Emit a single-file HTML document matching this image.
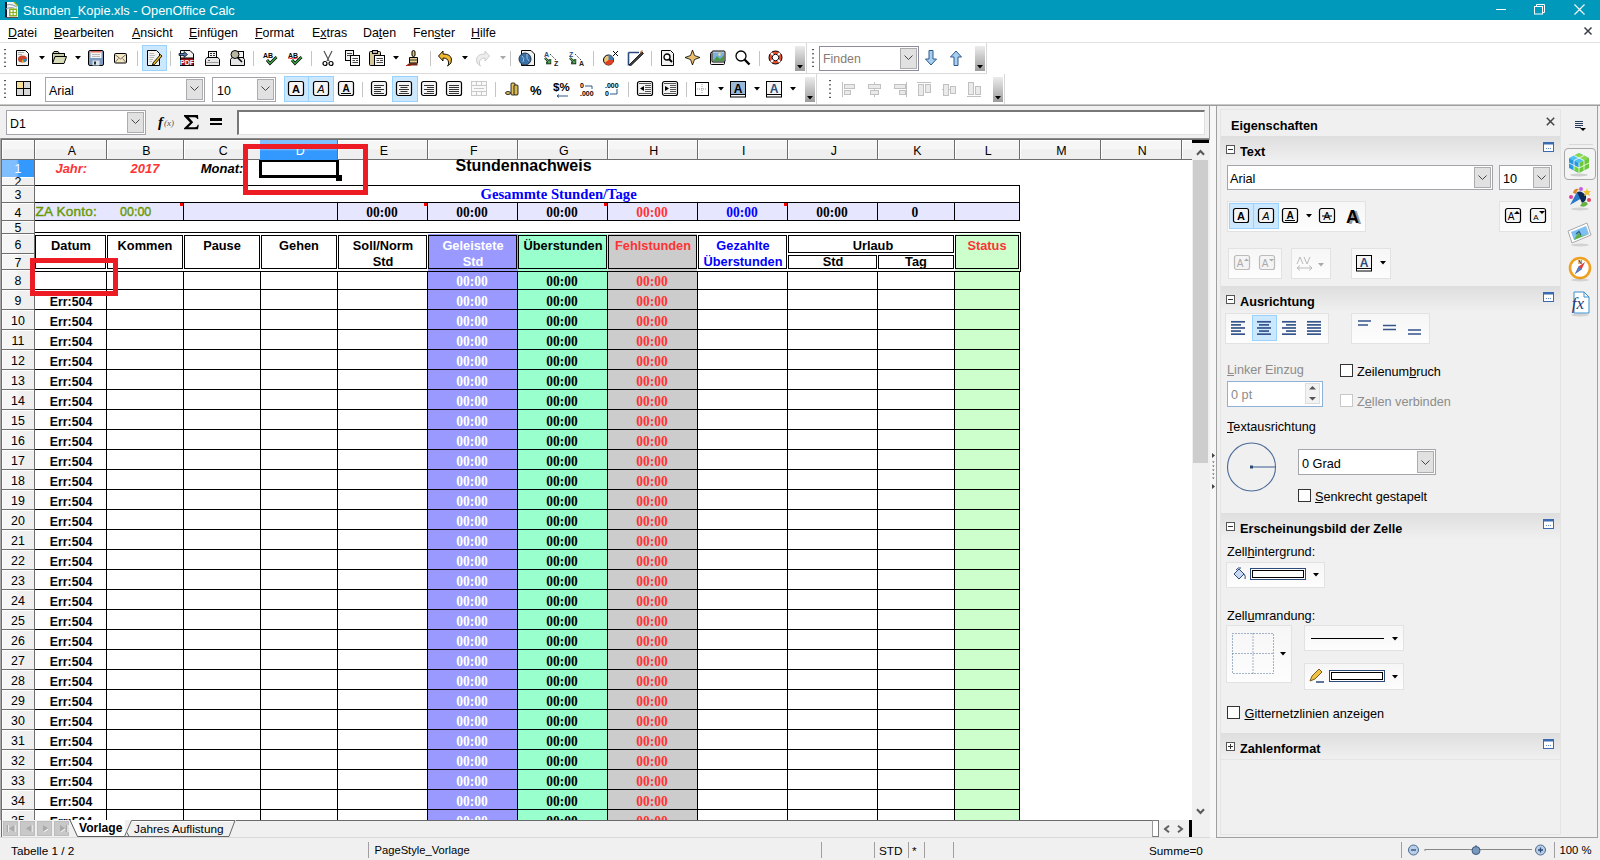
<!DOCTYPE html><html><head><meta charset="utf-8"><title>OpenOffice Calc</title><style>
html,body{margin:0;padding:0}body{width:1600px;height:860px;position:relative;overflow:hidden;background:#fff;font-family:'Liberation Sans',sans-serif}
.a{position:absolute}.t{white-space:pre}svg{overflow:visible}
</style></head><body>
<div class="a" style="left:0px;top:0px;width:1600px;height:20px;background:#0099bc;"></div>
<svg class="a" style="left:5px;top:2px;" width="13" height="15" viewBox="0 0 13 15"><path d="M0 0H9L13 4V15H0Z" fill="#f4f4fa"/><rect x="0" y="0" width="2" height="15" fill="#101828"/><path d="M2 3Q6 1 12 5M1 7Q5 5 9 6" stroke="#9aa" stroke-width="1.2" fill="none"/><path d="M9 0L13 4" stroke="#8cb41c" stroke-width="1.5"/><rect x="4" y="6.5" width="8" height="8" fill="#8cb41c"/><rect x="5.5" y="8" width="2" height="2" fill="#fff"/><rect x="8.8" y="8" width="2" height="2" fill="#fff"/><rect x="5.5" y="11" width="2" height="2" fill="#fff"/><rect x="8.8" y="11" width="2" height="2" fill="#fff"/><rect x="0" y="15" width="13" height="1" fill="#6a4a4a"/></svg>
<div class="a t" style="top:4.96px;font-size:12.8px;line-height:12.8px;color:#fff;font-family:'Liberation Sans',sans-serif;left:23px;">Stunden_Kopie.xls - OpenOffice Calc</div>
<div class="a" style="left:1496px;top:9px;width:10px;height:1px;background:#fff;"></div>
<svg class="a" style="left:1534px;top:4px;" width="12" height="12" viewBox="0 0 12 12"><rect x="0.5" y="2.5" width="8" height="7.5" fill="none" stroke="#fff"/><path d="M2.5 2.5V0.5H10.5V8.5H8.5" fill="none" stroke="#fff"/></svg>
<svg class="a" style="left:1574px;top:4px;" width="11" height="11" viewBox="0 0 11 11"><path d="M0.5 0.5L10.5 10.5M10.5 0.5L0.5 10.5" stroke="#fff" stroke-width="1.1"/></svg>
<div class="a t" style="top:26.50px;font-size:12.4px;line-height:12.4px;color:#000;font-family:'Liberation Sans',sans-serif;left:8px;"><u>D</u>atei</div>
<div class="a t" style="top:26.50px;font-size:12.4px;line-height:12.4px;color:#000;font-family:'Liberation Sans',sans-serif;left:54px;"><u>B</u>earbeiten</div>
<div class="a t" style="top:26.50px;font-size:12.4px;line-height:12.4px;color:#000;font-family:'Liberation Sans',sans-serif;left:132px;"><u>A</u>nsicht</div>
<div class="a t" style="top:26.50px;font-size:12.4px;line-height:12.4px;color:#000;font-family:'Liberation Sans',sans-serif;left:189px;"><u>E</u>infügen</div>
<div class="a t" style="top:26.50px;font-size:12.4px;line-height:12.4px;color:#000;font-family:'Liberation Sans',sans-serif;left:255px;"><u>F</u>ormat</div>
<div class="a t" style="top:26.50px;font-size:12.4px;line-height:12.4px;color:#000;font-family:'Liberation Sans',sans-serif;left:312px;">E<u>x</u>tras</div>
<div class="a t" style="top:26.50px;font-size:12.4px;line-height:12.4px;color:#000;font-family:'Liberation Sans',sans-serif;left:363px;">Da<u>t</u>en</div>
<div class="a t" style="top:26.50px;font-size:12.4px;line-height:12.4px;color:#000;font-family:'Liberation Sans',sans-serif;left:413px;">Fen<u>s</u>ter</div>
<div class="a t" style="top:26.50px;font-size:12.4px;line-height:12.4px;color:#000;font-family:'Liberation Sans',sans-serif;left:471px;"><u>H</u>ilfe</div>
<svg class="a" style="left:1584px;top:27px;" width="8" height="8" viewBox="0 0 8 8"><path d="M0.5 0.5L7.5 7.5M7.5 0.5L0.5 7.5" stroke="#3a3f48" stroke-width="1.5"/></svg>
<div class="a" style="left:0px;top:42px;width:1600px;height:1px;background:#e3e3e3;"></div>
<div class="a" style="left:0px;top:73px;width:987px;height:1px;background:#dadada;"></div>
<div class="a" style="left:0px;top:104px;width:1600px;height:1px;background:#c8c8c8;"></div>
<div class="a" style="left:0px;top:105px;width:1600px;height:1px;background:#9a9a9a;"></div>
<svg class="a" style="left:4px;top:49px;" width="3" height="18" viewBox="0 0 3 18"><rect x="0" y="0.0" width="2" height="1.2" fill="#555"/><rect x="0" y="4.2" width="2" height="1.2" fill="#555"/><rect x="0" y="8.4" width="2" height="1.2" fill="#555"/><rect x="0" y="12.6" width="2" height="1.2" fill="#555"/><rect x="0" y="16.8" width="2" height="1.2" fill="#555"/></svg>
<svg class="a" style="left:39px;top:56px;" width="6" height="4" viewBox="0 0 6 4"><path d="M0 0H6L3 3.5Z" fill="#000"/></svg>
<svg class="a" style="left:75px;top:56px;" width="6" height="4" viewBox="0 0 6 4"><path d="M0 0H6L3 3.5Z" fill="#000"/></svg>
<div class="a" style="left:137px;top:51px;width:1px;height:15px;background:#c4c4c4;"></div>
<div class="a" style="left:142px;top:45px;width:23px;height:24px;border:1px solid #99d1ff;background:#cce8ff;"></div>
<div class="a" style="left:170px;top:51px;width:1px;height:15px;background:#c4c4c4;"></div>
<div class="a" style="left:253px;top:51px;width:1px;height:15px;background:#c4c4c4;"></div>
<div class="a" style="left:311px;top:51px;width:1px;height:15px;background:#c4c4c4;"></div>
<svg class="a" style="left:393px;top:56px;" width="6" height="4" viewBox="0 0 6 4"><path d="M0 0H6L3 3.5Z" fill="#000"/></svg>
<div class="a" style="left:430px;top:51px;width:1px;height:15px;background:#c4c4c4;"></div>
<svg class="a" style="left:462px;top:56px;" width="6" height="4" viewBox="0 0 6 4"><path d="M0 0H6L3 3.5Z" fill="#000"/></svg>
<svg class="a" style="left:500px;top:56px;" width="6" height="4" viewBox="0 0 6 4"><path d="M0 0H6L3 3.5Z" fill="#aaa"/></svg>
<div class="a" style="left:510px;top:51px;width:1px;height:15px;background:#c4c4c4;"></div>
<div class="a" style="left:593px;top:51px;width:1px;height:15px;background:#c4c4c4;"></div>
<div class="a" style="left:651px;top:51px;width:1px;height:15px;background:#c4c4c4;"></div>
<div class="a" style="left:759px;top:51px;width:1px;height:15px;background:#c4c4c4;"></div>
<div class="a" style="left:795px;top:46px;width:10px;height:25px;background:linear-gradient(#ececec,#9c9c9c)"></div>
<svg class="a" style="left:797px;top:65px;" width="6" height="4" viewBox="0 0 6 4"><path d="M0 0H6L3 3.5Z" fill="#000"/></svg>
<div class="a" style="left:806px;top:43px;width:1px;height:31px;background:#d8d8d8;"></div>
<svg class="a" style="left:812px;top:49px;" width="3" height="18" viewBox="0 0 3 18"><rect x="0" y="0.0" width="2" height="1.2" fill="#555"/><rect x="0" y="4.2" width="2" height="1.2" fill="#555"/><rect x="0" y="8.4" width="2" height="1.2" fill="#555"/><rect x="0" y="12.6" width="2" height="1.2" fill="#555"/><rect x="0" y="16.8" width="2" height="1.2" fill="#555"/></svg>
<div class="a" style="left:819px;top:46px;width:98px;height:23px;border:1px solid #8c8ca0;background:#fff;"></div>
<div class="a" style="left:900px;top:48px;width:17px;height:21px;background:#e1e1e1;box-sizing:border-box;border:1px solid #adadad"></div>
<svg class="a" style="left:904px;top:55px;" width="9" height="5" viewBox="0 0 9 5"><path d="M0.5 0.5L4.5 4.5L8.5 0.5" stroke="#444" fill="none"/></svg>
<div class="a t" style="top:52.50px;font-size:12.4px;line-height:12.4px;color:#8a7a70;font-family:'Liberation Sans',sans-serif;left:823px;">Finden</div>
<div class="a" style="left:975px;top:46px;width:10px;height:25px;background:linear-gradient(#ececec,#9c9c9c)"></div>
<svg class="a" style="left:977px;top:65px;" width="6" height="4" viewBox="0 0 6 4"><path d="M0 0H6L3 3.5Z" fill="#000"/></svg>
<div class="a" style="left:986px;top:43px;width:1px;height:31px;background:#d8d8d8;"></div>
<svg class="a" style="left:4px;top:80px;" width="3" height="18" viewBox="0 0 3 18"><rect x="0" y="0.0" width="2" height="1.2" fill="#555"/><rect x="0" y="4.2" width="2" height="1.2" fill="#555"/><rect x="0" y="8.4" width="2" height="1.2" fill="#555"/><rect x="0" y="12.6" width="2" height="1.2" fill="#555"/><rect x="0" y="16.8" width="2" height="1.2" fill="#555"/></svg>
<div class="a" style="left:45px;top:77px;width:158px;height:23px;border:1px solid #a4a4aa;background:#fff;"></div>
<div class="a" style="left:186px;top:79px;width:17px;height:21px;background:#e1e1e1;box-sizing:border-box;border:1px solid #adadad"></div>
<svg class="a" style="left:190px;top:86px;" width="9" height="5" viewBox="0 0 9 5"><path d="M0.5 0.5L4.5 4.5L8.5 0.5" stroke="#444" fill="none"/></svg>
<div class="a t" style="top:84.50px;font-size:12.4px;line-height:12.4px;color:#000;font-family:'Liberation Sans',sans-serif;left:49px;">Arial</div>
<div class="a" style="left:212px;top:77px;width:62px;height:23px;border:1px solid #a4a4aa;background:#fff;"></div>
<div class="a" style="left:257px;top:79px;width:17px;height:21px;background:#e1e1e1;box-sizing:border-box;border:1px solid #adadad"></div>
<svg class="a" style="left:261px;top:86px;" width="9" height="5" viewBox="0 0 9 5"><path d="M0.5 0.5L4.5 4.5L8.5 0.5" stroke="#444" fill="none"/></svg>
<div class="a t" style="top:84.50px;font-size:12.4px;line-height:12.4px;color:#000;font-family:'Liberation Sans',sans-serif;left:217px;">10</div>
<div class="a" style="left:284px;top:76px;width:23px;height:24px;border:1px solid #99d1ff;background:#cce8ff;"></div>
<div class="a" style="left:308px;top:76px;width:24px;height:24px;border:1px solid #99d1ff;background:#cce8ff;"></div>
<div class="a" style="left:362px;top:82px;width:1px;height:15px;background:#c4c4c4;"></div>
<div class="a" style="left:392px;top:76px;width:24px;height:24px;border:1px solid #99d1ff;background:#cce8ff;"></div>
<div class="a" style="left:495px;top:82px;width:1px;height:15px;background:#c4c4c4;"></div>
<div class="a t" style="top:84.00px;font-size:13px;line-height:13px;color:#000;font-family:'Liberation Sans',sans-serif;font-weight:bold;left:530px;">%</div>
<div class="a t" style="top:82.27px;font-size:11.5px;line-height:11.5px;color:#000;font-family:'Liberation Sans',sans-serif;font-weight:bold;left:553px;">$%</div>
<div class="a" style="left:628px;top:82px;width:1px;height:15px;background:#c4c4c4;"></div>
<div class="a" style="left:686px;top:82px;width:1px;height:15px;background:#c4c4c4;"></div>
<svg class="a" style="left:718px;top:87px;" width="6" height="4" viewBox="0 0 6 4"><path d="M0 0H6L3 3.5Z" fill="#000"/></svg>
<svg class="a" style="left:754px;top:87px;" width="6" height="4" viewBox="0 0 6 4"><path d="M0 0H6L3 3.5Z" fill="#000"/></svg>
<svg class="a" style="left:790px;top:87px;" width="6" height="4" viewBox="0 0 6 4"><path d="M0 0H6L3 3.5Z" fill="#000"/></svg>
<div class="a" style="left:805px;top:77px;width:10px;height:25px;background:linear-gradient(#ececec,#9c9c9c)"></div>
<svg class="a" style="left:807px;top:96px;" width="6" height="4" viewBox="0 0 6 4"><path d="M0 0H6L3 3.5Z" fill="#000"/></svg>
<div class="a" style="left:816px;top:74px;width:1px;height:30px;background:#d8d8d8;"></div>
<svg class="a" style="left:829px;top:80px;" width="3" height="18" viewBox="0 0 3 18"><rect x="0" y="0.0" width="2" height="1.2" fill="#555"/><rect x="0" y="4.2" width="2" height="1.2" fill="#555"/><rect x="0" y="8.4" width="2" height="1.2" fill="#555"/><rect x="0" y="12.6" width="2" height="1.2" fill="#555"/><rect x="0" y="16.8" width="2" height="1.2" fill="#555"/></svg>
<div class="a" style="left:993px;top:77px;width:10px;height:25px;background:linear-gradient(#ececec,#9c9c9c)"></div>
<svg class="a" style="left:995px;top:96px;" width="6" height="4" viewBox="0 0 6 4"><path d="M0 0H6L3 3.5Z" fill="#000"/></svg>
<div class="a" style="left:1004px;top:74px;width:1px;height:30px;background:#d8d8d8;"></div>
<svg class="a" style="left:0px;top:0px;pointer-events:none" width="1600" height="110" viewBox="0 0 1600 110"><g transform="translate(16,50)"><path d="M0.5 0.5H9.5L12.5 3.5V15.5H0.5Z" fill="#f4f4f4" stroke="#000"/><ellipse cx="6.5" cy="9" rx="4.5" ry="3.5" fill="#c8452e"/><path d="M6.5 9L11 9A4.5 3.5 0 0 1 8 12.3Z" fill="#2e8ab8"/><path d="M6.5 9L8 12.3A4.5 3.5 0 0 1 6 12.5Z" fill="#e0c020"/><path d="M2 2.5H8M2 4.5H6" stroke="#aaa"/></g><g transform="translate(52,51)"><path d="M0.5 2.5L2 0.5H6L7.5 2.5H12.5V6" fill="#c9ccaa" stroke="#000"/><path d="M0.5 12.5V2.5H12.5V5.5" fill="#c9ccaa" stroke="#000"/><path d="M0.5 12.5L3 5.5H14.5L12 12.5Z" fill="#d8dbb8" stroke="#000"/></g><g transform="translate(88,50)"><rect x="0.5" y="0.5" width="15" height="15" rx="1.5" fill="#7d9cc0" stroke="#000"/><rect x="2.5" y="1" width="11" height="7" fill="#f4f4f4"/><rect x="2.5" y="1" width="11" height="1.5" fill="#e07060"/><path d="M4 4.5H12M4 6.5H12" stroke="#bbb"/><rect x="4.5" y="10.5" width="7" height="5" fill="#dde4ee"/><rect x="6" y="11.5" width="2" height="3" fill="#233"/></g><g transform="translate(114,53)"><rect x="0.5" y="0.5" width="12" height="9.5" rx="1" fill="#f5e6c4" stroke="#000"/><path d="M1 1.5L6.5 6L12 1.5M1 9.5L4.5 5.5M12 9.5L8.5 5.5" stroke="#555" fill="none" stroke-width="0.8"/></g><g transform="translate(147,50)"><path d="M0.5 0.5H9.5L12.5 3.5V15.5H0.5Z" fill="#f2f2f2" stroke="#000"/><path d="M2.5 3.5H7M2.5 5.5H8M2.5 7.5H7M2.5 9.5H6M2.5 11.5H5" stroke="#bbb"/><path d="M6 13L13.5 4.5L15 6L7.5 14.5L5.5 15Z" fill="#f0c020" stroke="#000" stroke-width="0.9"/></g><g transform="translate(179,50)"><path d="M1.5 0.5H11L14.5 4V15.5H1.5Z" fill="#f2f2f2" stroke="#000"/><rect x="1.5" y="8" width="13" height="7.5" fill="#a8121a" stroke="#000"/><text x="8" y="14.6" font-family="Liberation Sans" font-weight="bold" font-size="7" fill="#fff" text-anchor="middle">PDF</text><path d="M0 3.5H5V1.5L8.5 4.5L5 7.5V5.5H0Z" fill="#4a7ab0" stroke="#000" stroke-width="0.7"/></g><g transform="translate(205,51)"><rect x="3.5" y="0.5" width="8" height="8" fill="#f4f4f4" stroke="#000"/><path d="M5 2.5H7M8 2.5H10M5 4.5H7M8 4.5H10M5 6.5H7" stroke="#333"/><path d="M0.5 8.5L2 6.5H13L14.5 8.5V14.5H0.5Z" fill="#e6e6e6" stroke="#000"/><path d="M1.5 11.5H13.5" stroke="#999"/><path d="M3 9.5H5" stroke="#666"/></g><g transform="translate(230,50)"><rect x="6.5" y="1.5" width="7" height="7" fill="#f4f4f4" stroke="#000"/><path d="M0.5 9.5L2 7.5H13L14.5 9.5V15.5H0.5Z" fill="#e6e6e6" stroke="#000"/><circle cx="5" cy="4.5" r="4" fill="#b8b8a0" stroke="#000"/><path d="M7.5 7.5L12 12" stroke="#000" stroke-width="1.5"/></g><g transform="translate(262,50)"><text x="1" y="7.5" font-family="Liberation Sans" font-weight="bold" font-size="8" fill="#000" textLength="10" lengthAdjust="spacingAndGlyphs">AB</text><path d="M5 10L8 13.5L14.5 7" stroke="#000" stroke-width="2.8" fill="none"/><path d="M5 10L8 13.5L14.5 7" stroke="#3aa84a" stroke-width="1.3" fill="none"/></g><g transform="translate(287,50)"><text x="1" y="7.5" font-family="Liberation Sans" font-weight="bold" font-size="8" fill="#000" textLength="10" lengthAdjust="spacingAndGlyphs">AB</text><path d="M1 8.3Q2 7.5 3 8.3T5 8.3T7 8.3T9 8.3T11 8.3" stroke="#e00" fill="none" stroke-width="0.8"/><path d="M5 10L8 13.5L14.5 7" stroke="#000" stroke-width="2.8" fill="none"/><path d="M5 10L8 13.5L14.5 7" stroke="#3aa84a" stroke-width="1.3" fill="none"/></g><g transform="translate(322,51)"><path d="M2 0L7 10M10 0L5 10" stroke="#555" stroke-width="1.2"/><circle cx="3" cy="12.5" r="2" fill="none" stroke="#000" stroke-width="1.2"/><circle cx="9" cy="12.5" r="2" fill="none" stroke="#000" stroke-width="1.2"/></g><g transform="translate(345,50)"><rect x="0.5" y="0.5" width="8" height="10" fill="#f2f2f2" stroke="#000"/><rect x="5.5" y="5.5" width="9" height="10" fill="#f8f8f8" stroke="#000"/><path d="M2 3.5H7M2 5.5H5M7.5 8.5H13M7.5 10.5H10M11 10.5H13M7.5 12.5H13" stroke="#333" stroke-width="0.9"/></g><g transform="translate(369,50)"><rect x="0.5" y="1.5" width="11" height="14" rx="1" fill="#d6c79a" stroke="#000"/><rect x="3.5" y="0.5" width="5" height="3" fill="#bbb" stroke="#000"/><rect x="5.5" y="5.5" width="10" height="10" fill="#f8f8f8" stroke="#000"/><path d="M7.5 8.5H14M7.5 10.5H10M11 10.5H14M7.5 12.5H14" stroke="#333" stroke-width="0.9"/></g><g transform="translate(406,50)"><rect x="6" y="0.5" width="3" height="6" rx="1.5" fill="#e0c070" stroke="#000"/><path d="M3.5 7.5H11.5V13H3.5Z" fill="#e6d090" stroke="#000"/><path d="M4 10H11" stroke="#333"/><path d="M3.5 13L0 15.5H11.5V13Z" fill="#6a2a1a"/><path d="M0 15.5H5" stroke="#c03020"/></g><g transform="translate(438,50)"><path d="M5 1L0.5 6L5 11V8Q10 8 10.5 12Q11 14.5 9.5 16Q14.5 13.5 13.5 9Q12.5 4 5 4Z" fill="#f0b830" stroke="#000" stroke-width="0.9"/></g><g transform="translate(476,50)"><path d="M9 1L13.5 6L9 11V8Q4 8 3.5 12Q3 14.5 4.5 16Q-0.5 13.5 0.5 9Q1.5 4 9 4Z" fill="#eee" stroke="#c8c8c8" stroke-width="0.9"/></g><g transform="translate(518,50)"><path d="M3.5 0.5H13L16.5 4V15.5H3.5Z" fill="#f2f2f2" stroke="#000"/><circle cx="7" cy="9" r="6" fill="#3a70a8" stroke="#234"/><path d="M4 6Q7 8 5 12M9 4Q8 9 11 11" stroke="#9ec0e0" fill="none"/></g><g transform="translate(544,50)"><text x="0" y="6.5" font-family="Liberation Sans" font-weight="bold" font-size="7" fill="#2a4a80">A</text><text x="10" y="15.5" font-family="Liberation Sans" font-weight="bold" font-size="7" fill="#222">Z</text><path d="M6 4L12 10" stroke="#000" stroke-dasharray="1 1.5"/><path d="M1 8L6 13M6 9V13H2" stroke="#000" stroke-width="2.4" fill="none"/><path d="M1 8L6 13M6 9V13H2" stroke="#5ab060" stroke-width="1.2" fill="none"/></g><g transform="translate(569,50)"><text x="0" y="6.5" font-family="Liberation Sans" font-weight="bold" font-size="7" fill="#2a4a80">Z</text><text x="10" y="15.5" font-family="Liberation Sans" font-weight="bold" font-size="7" fill="#222">A</text><path d="M6 4L12 10" stroke="#000" stroke-dasharray="1 1.5"/><path d="M1 8L6 13M6 9V13H2" stroke="#000" stroke-width="2.4" fill="none"/><path d="M1 8L6 13M6 9V13H2" stroke="#5ab060" stroke-width="1.2" fill="none"/></g><g transform="translate(603,50)"><circle cx="5.5" cy="10" r="5" fill="#e8c878" stroke="#000"/><path d="M5.5 10V5A5 5 0 0 1 10.5 10Z" fill="#4a7ab0"/><path d="M5.5 10H10.5A5 5 0 0 1 1.5 13Z" fill="#e04020"/><path d="M10 1L15 6M15 1L10 6" stroke="#000" stroke-width="1"/></g><g transform="translate(628,50)"><path d="M0.5 2.5H11M0.5 2.5V15.5" stroke="#2a4a80" stroke-width="1.6" fill="none"/><path d="M1 15L14 2L15.5 3.5L3 15.5Z" fill="#444" stroke="#000" stroke-width="0.8"/><path d="M12 3L14.5 0.5" stroke="#c88050" stroke-width="1.5"/></g><g transform="translate(661,50)"><path d="M0.5 0.5H9.5L12.5 3.5V15.5H0.5Z" fill="#f2f2f2" stroke="#000"/><circle cx="6" cy="7" r="3" fill="#fff" stroke="#000" stroke-width="1.3"/><path d="M8 9L11 12" stroke="#000" stroke-width="2"/></g><g transform="translate(685,50)"><path d="M7.5 0L9.5 5.5L15 7.5L9.5 9.5L7.5 15L5.5 9.5L0 7.5L5.5 5.5Z" fill="#e8c070" stroke="#000" stroke-width="0.8"/></g><g transform="translate(710,50)"><rect x="0.5" y="2.5" width="14" height="12" rx="1" fill="#f2f2f2" stroke="#000"/><rect x="2" y="1" width="13" height="11" rx="1" fill="#ddd" stroke="#000"/><rect x="3" y="2.5" width="11" height="8.5" fill="#7ab0e0"/><path d="M3 11L7 6L10 9L14 5V11Z" fill="#4a9a4a"/><circle cx="9.5" cy="4.5" r="1.2" fill="#ffe070"/></g><g transform="translate(735,50)"><circle cx="6" cy="6" r="5" fill="#fff" stroke="#000" stroke-width="1.3"/><path d="M9.5 9.5L14.5 14.5" stroke="#000" stroke-width="2.4"/></g><g transform="translate(768,50)"><circle cx="7.5" cy="7.5" r="6.5" fill="#e85030" stroke="#000"/><circle cx="7.5" cy="7.5" r="3.3" fill="#fff" stroke="#000"/><path d="M3 3L5 5M12 3L10 5M3 12L5 10M12 12L10 10" stroke="#fff" stroke-width="2.2"/></g><g transform="translate(925,50)"><path d="M4 0.5H8V9H11.5L6 15L0.5 9H4Z" fill="#a8cef0" stroke="#2c5a8a"/></g><g transform="translate(950,50)"><path d="M4 15.5H8V7H11.5L6 1L0.5 7H4Z" fill="#a8cef0" stroke="#2c5a8a"/></g><g transform="translate(16,81)"><rect x="0.5" y="0.5" width="14" height="14" fill="#d8d8d8" stroke="#000"/><rect x="1" y="1" width="6" height="6" fill="#f8e098"/><path d="M7.5 0.5V14.5M0.5 7.5H14.5" stroke="#000"/></g><g transform="translate(288,81)"><rect x="0.5" y="0.5" width="15" height="14" rx="2" fill="#f4f4f4" stroke="#000" stroke-width="1.2"/><text x="8" y="12" font-family="Liberation Sans" font-weight="bold" font-size="11" text-anchor="middle">A</text></g><g transform="translate(313,81)"><rect x="0.5" y="0.5" width="15" height="14" rx="2" fill="#f4f4f4" stroke="#000" stroke-width="1.2"/><text x="8" y="12" font-family="Liberation Sans" font-style="italic" font-size="11" text-anchor="middle">A</text></g><g transform="translate(338,81)"><rect x="0.5" y="0.5" width="15" height="14" rx="2" fill="#f4f4f4" stroke="#000" stroke-width="1.2"/><text x="8" y="11" font-family="Liberation Sans" font-weight="bold" font-size="10" text-anchor="middle">A</text><path d="M3 12.5H13" stroke="#000"/></g><g transform="translate(371,81)"><rect x="0.5" y="0.5" width="15" height="14" rx="2" fill="#f4f4f4" stroke="#000" stroke-width="1.2"/><path d="M3 4.5H13" stroke="#333"/><path d="M3 6.5H10" stroke="#333"/><path d="M3 8.5H13" stroke="#333"/><path d="M3 10.5H10" stroke="#333"/><path d="M3 12.5H13" stroke="#333"/></g><g transform="translate(396,81)"><rect x="0.5" y="0.5" width="15" height="14" rx="2" fill="#f4f4f4" stroke="#000" stroke-width="1.2"/><path d="M3.0 4.5H13.0" stroke="#333"/><path d="M4.5 6.5H11.5" stroke="#333"/><path d="M3.0 8.5H13.0" stroke="#333"/><path d="M4.5 10.5H11.5" stroke="#333"/><path d="M3.0 12.5H13.0" stroke="#333"/></g><g transform="translate(421,81)"><rect x="0.5" y="0.5" width="15" height="14" rx="2" fill="#f4f4f4" stroke="#000" stroke-width="1.2"/><path d="M3 4.5H13" stroke="#333"/><path d="M6 6.5H13" stroke="#333"/><path d="M3 8.5H13" stroke="#333"/><path d="M6 10.5H13" stroke="#333"/><path d="M3 12.5H13" stroke="#333"/></g><g transform="translate(446,81)"><rect x="0.5" y="0.5" width="15" height="14" rx="2" fill="#f4f4f4" stroke="#000" stroke-width="1.2"/><path d="M3 4.5H13" stroke="#333"/><path d="M3 6.5H13" stroke="#333"/><path d="M3 8.5H13" stroke="#333"/><path d="M3 10.5H13" stroke="#333"/><path d="M3 12.5H13" stroke="#333"/></g><g transform="translate(471,81)" opacity="0.35"><rect x="0.5" y="0.5" width="15" height="14" fill="#eee" stroke="#666"/><path d="M0.5 4.5H15.5M0.5 10.5H15.5M5.5 0.5V4.5M10.5 0.5V4.5M5.5 10.5V14.5M10.5 10.5V14.5M3 7.5H13" stroke="#666"/></g><g transform="translate(505,81)"><ellipse cx="3" cy="12" rx="2.5" ry="1.5" fill="#e0c060" stroke="#000" stroke-width="0.8"/><rect x="6" y="2" width="4" height="12" rx="1" fill="#e0c060" stroke="#000" stroke-width="0.8"/><rect x="9" y="4" width="4" height="10" rx="1" fill="#d8b850" stroke="#000" stroke-width="0.8"/></g><path d="M557 96H568M557 96L559 94.5M557 96L559 97.5" stroke="#2c5a8a"/><text x="580" y="88" font-family="Liberation Sans" font-weight="bold" font-size="7">0</text><text x="580" y="96" font-family="Liberation Sans" font-weight="bold" font-size="7">.000</text><path d="M585 86H592V89" stroke="#2c5a8a" fill="none"/><text x="605" y="88" font-family="Liberation Sans" font-weight="bold" font-size="7">.000</text><text x="605" y="96" font-family="Liberation Sans" font-weight="bold" font-size="7">0</text><path d="M617 89V94H610" stroke="#2c5a8a" fill="none"/><g transform="translate(637,81)"><rect x="0.5" y="0.5" width="15" height="14" rx="2" fill="#f4f4f4" stroke="#000" stroke-width="1.2"/><path d="M8 4.5H14M8 6.5H14M8 8.5H14M8 10.5H14M2 2.5H14M2 12.5H14" stroke="#555"/><path d="M7 5L3 7.5L7 10Z" fill="#000"/></g><g transform="translate(662,81)"><rect x="0.5" y="0.5" width="15" height="14" rx="2" fill="#f4f4f4" stroke="#000" stroke-width="1.2"/><path d="M8 4.5H14M8 6.5H14M8 8.5H14M8 10.5H14M2 2.5H14M2 12.5H14" stroke="#555"/><path d="M3 5L7 7.5L3 10Z" fill="#000"/></g><g transform="translate(695,82)"><rect x="0.5" y="0.5" width="13" height="13" fill="#fff" stroke="#000"/><path d="M7 2V12M2 7H12" stroke="#999" stroke-dasharray="1 1"/></g><g transform="translate(730,81)"><rect x="0.5" y="0.5" width="15" height="13" fill="#9ab8d8" stroke="#000"/><text x="8" y="12" font-family="Liberation Sans" font-weight="bold" font-size="12" text-anchor="middle">A</text><rect x="0.5" y="13.5" width="15" height="2.5" fill="#fff" stroke="#000"/></g><g transform="translate(766,81)"><rect x="0.5" y="0.5" width="15" height="13" fill="#f4f4f4" stroke="#000"/><text x="8" y="12" font-family="Liberation Sans" font-weight="bold" font-size="12" fill="#2c4a78" text-anchor="middle">A</text><rect x="0.5" y="13.5" width="15" height="2.5" fill="#fff" stroke="#000"/></g><g stroke="#bbb" fill="#e8e8e8" opacity="0.9"><path d="M842.5 82V97" /><rect x="844.5" y="84.5" width="10" height="4"/><rect x="844.5" y="90.5" width="6" height="4"/><path d="M874.5 82V97"/><rect x="868.5" y="84.5" width="12" height="4"/><rect x="870.5" y="90.5" width="8" height="4"/><path d="M906.5 82V97"/><rect x="894.5" y="84.5" width="11" height="4"/><rect x="899.5" y="90.5" width="6" height="4"/><path d="M917 82.5H931"/><rect x="918.5" y="84.5" width="5" height="11"/><rect x="925.5" y="84.5" width="5" height="8"/><path d="M942 89.5H956"/><rect x="943.5" y="84.5" width="5" height="11"/><rect x="950.5" y="86.5" width="5" height="7"/><path d="M967 96.5H981"/><rect x="968.5" y="82.5" width="5" height="12"/><rect x="975.5" y="86.5" width="5" height="8"/></g></svg>
<div class="a" style="left:0px;top:106px;width:1210px;height:32px;background:#f0f0f0;"></div>
<div class="a" style="left:6px;top:110px;width:138px;height:23px;border:1px solid #a4a4aa;background:#fff;"></div>
<div class="a" style="left:127px;top:112px;width:17px;height:21px;background:#e1e1e1;box-sizing:border-box;border:1px solid #adadad"></div>
<svg class="a" style="left:131px;top:119px;" width="9" height="5" viewBox="0 0 9 5"><path d="M0.5 0.5L4.5 4.5L8.5 0.5" stroke="#444" fill="none"/></svg>
<div class="a t" style="top:117.50px;font-size:12.4px;line-height:12.4px;color:#000;font-family:'Liberation Sans',sans-serif;left:10px;">D1</div>
<div class="a t" style="top:115.44px;font-size:15px;line-height:15px;color:#000;font-family:'Liberation Serif',serif;font-weight:bold;font-style:italic;left:158px;">f</div>
<div class="a t" style="top:119.46px;font-size:9px;line-height:9px;color:#555;font-family:'Liberation Serif',serif;font-style:italic;left:164px;">(x)</div>
<svg class="a" style="left:184px;top:115px;" width="15" height="15" viewBox="0 0 15 15"><path d="M0 0H14L14.3 4H13.3Q12.8 2.2 10.5 2.2H4.8L9.2 7.2L4.2 12.3H11Q13.2 12.3 13.8 9.8H14.8L14 14.2H0V13.2L6 7.4L0 1.2Z" fill="#000"/></svg>
<div class="a" style="left:210px;top:118px;width:12px;height:2.5px;background:#000;"></div>
<div class="a" style="left:210px;top:122.5px;width:12px;height:2.5px;background:#000;"></div>
<div class="a" style="left:237px;top:110px;width:965px;height:22px;background:#fff;border-top:2px solid #777;border-left:2px solid #777;border-right:1px solid #e0e0e0;border-bottom:1px solid #e0e0e0"></div>
<div class="a" style="left:0px;top:138px;width:1210px;height:1px;background:#8a8a8a;"></div>
<div class="a" style="left:0px;top:139px;width:1210px;height:1px;background:#6e6e6e;"></div>
<div class="a" style="left:0px;top:138px;width:1px;height:682px;background:#a8a8a8;"></div>
<div class="a" style="left:1px;top:139px;width:1px;height:681px;background:#6e6e6e;"></div>
<div class="a" style="left:2px;top:140px;width:1190px;height:19px;background:linear-gradient(#f6f6f6 0,#f6f6f6 45%,#efefef 55%,#efefef 100%)"></div>
<div class="a" style="left:2px;top:140px;width:1190px;height:1px;background:#fff;"></div>
<div class="a" style="left:2px;top:159px;width:1190px;height:1px;background:#6e6e6e;"></div>
<div class="a" style="left:2px;top:160px;width:32px;height:660px;background:linear-gradient(90deg,#f6f6f6 0,#f6f6f6 45%,#efefef 55%,#efefef 100%)"></div>
<div class="a" style="left:2px;top:140px;width:1px;height:680px;background:#fff;"></div>
<div class="a" style="left:34px;top:140px;width:1px;height:19px;background:#6e6e6e;"></div>
<div class="a" style="left:35px;top:141px;width:1px;height:18px;background:#fff;"></div>
<div class="a" style="left:106px;top:140px;width:1px;height:19px;background:#6e6e6e;"></div>
<div class="a" style="left:107px;top:141px;width:1px;height:18px;background:#fff;"></div>
<div class="a" style="left:183px;top:140px;width:1px;height:19px;background:#6e6e6e;"></div>
<div class="a" style="left:184px;top:141px;width:1px;height:18px;background:#fff;"></div>
<div class="a" style="left:260px;top:140px;width:1px;height:19px;background:#6e6e6e;"></div>
<div class="a" style="left:261px;top:141px;width:1px;height:18px;background:#fff;"></div>
<div class="a" style="left:337px;top:140px;width:1px;height:19px;background:#6e6e6e;"></div>
<div class="a" style="left:338px;top:141px;width:1px;height:18px;background:#fff;"></div>
<div class="a" style="left:427px;top:140px;width:1px;height:19px;background:#6e6e6e;"></div>
<div class="a" style="left:428px;top:141px;width:1px;height:18px;background:#fff;"></div>
<div class="a" style="left:517px;top:140px;width:1px;height:19px;background:#6e6e6e;"></div>
<div class="a" style="left:518px;top:141px;width:1px;height:18px;background:#fff;"></div>
<div class="a" style="left:607px;top:140px;width:1px;height:19px;background:#6e6e6e;"></div>
<div class="a" style="left:608px;top:141px;width:1px;height:18px;background:#fff;"></div>
<div class="a" style="left:697px;top:140px;width:1px;height:19px;background:#6e6e6e;"></div>
<div class="a" style="left:698px;top:141px;width:1px;height:18px;background:#fff;"></div>
<div class="a" style="left:787px;top:140px;width:1px;height:19px;background:#6e6e6e;"></div>
<div class="a" style="left:788px;top:141px;width:1px;height:18px;background:#fff;"></div>
<div class="a" style="left:877px;top:140px;width:1px;height:19px;background:#6e6e6e;"></div>
<div class="a" style="left:878px;top:141px;width:1px;height:18px;background:#fff;"></div>
<div class="a" style="left:954px;top:140px;width:1px;height:19px;background:#6e6e6e;"></div>
<div class="a" style="left:955px;top:141px;width:1px;height:18px;background:#fff;"></div>
<div class="a" style="left:1019px;top:140px;width:1px;height:19px;background:#6e6e6e;"></div>
<div class="a" style="left:1020px;top:141px;width:1px;height:18px;background:#fff;"></div>
<div class="a" style="left:1100px;top:140px;width:1px;height:19px;background:#6e6e6e;"></div>
<div class="a" style="left:1101px;top:141px;width:1px;height:18px;background:#fff;"></div>
<div class="a" style="left:1181px;top:140px;width:1px;height:19px;background:#6e6e6e;"></div>
<div class="a" style="left:1182px;top:141px;width:1px;height:18px;background:#fff;"></div>
<div class="a" style="left:34px;top:160px;width:1px;height:660px;background:#6e6e6e;"></div>
<div class="a" style="left:2px;top:159px;width:32px;height:1px;background:#6e6e6e;"></div>
<div class="a" style="left:2px;top:160px;width:32px;height:1px;background:#fff;"></div>
<div class="a" style="left:2px;top:176px;width:32px;height:1px;background:#6e6e6e;"></div>
<div class="a" style="left:2px;top:177px;width:32px;height:1px;background:#fff;"></div>
<div class="a" style="left:2px;top:185px;width:32px;height:1px;background:#6e6e6e;"></div>
<div class="a" style="left:2px;top:186px;width:32px;height:1px;background:#fff;"></div>
<div class="a" style="left:2px;top:202px;width:32px;height:1px;background:#6e6e6e;"></div>
<div class="a" style="left:2px;top:203px;width:32px;height:1px;background:#fff;"></div>
<div class="a" style="left:2px;top:220px;width:32px;height:1px;background:#6e6e6e;"></div>
<div class="a" style="left:2px;top:221px;width:32px;height:1px;background:#fff;"></div>
<div class="a" style="left:2px;top:233px;width:32px;height:1px;background:#6e6e6e;"></div>
<div class="a" style="left:2px;top:234px;width:32px;height:1px;background:#fff;"></div>
<div class="a" style="left:2px;top:253px;width:32px;height:1px;background:#6e6e6e;"></div>
<div class="a" style="left:2px;top:254px;width:32px;height:1px;background:#fff;"></div>
<div class="a" style="left:2px;top:269px;width:32px;height:1px;background:#6e6e6e;"></div>
<div class="a" style="left:2px;top:270px;width:32px;height:1px;background:#fff;"></div>
<div class="a" style="left:2px;top:289px;width:32px;height:1px;background:#6e6e6e;"></div>
<div class="a" style="left:2px;top:290px;width:32px;height:1px;background:#fff;"></div>
<div class="a" style="left:2px;top:309px;width:32px;height:1px;background:#6e6e6e;"></div>
<div class="a" style="left:2px;top:310px;width:32px;height:1px;background:#fff;"></div>
<div class="a" style="left:2px;top:329px;width:32px;height:1px;background:#6e6e6e;"></div>
<div class="a" style="left:2px;top:330px;width:32px;height:1px;background:#fff;"></div>
<div class="a" style="left:2px;top:349px;width:32px;height:1px;background:#6e6e6e;"></div>
<div class="a" style="left:2px;top:350px;width:32px;height:1px;background:#fff;"></div>
<div class="a" style="left:2px;top:369px;width:32px;height:1px;background:#6e6e6e;"></div>
<div class="a" style="left:2px;top:370px;width:32px;height:1px;background:#fff;"></div>
<div class="a" style="left:2px;top:389px;width:32px;height:1px;background:#6e6e6e;"></div>
<div class="a" style="left:2px;top:390px;width:32px;height:1px;background:#fff;"></div>
<div class="a" style="left:2px;top:409px;width:32px;height:1px;background:#6e6e6e;"></div>
<div class="a" style="left:2px;top:410px;width:32px;height:1px;background:#fff;"></div>
<div class="a" style="left:2px;top:429px;width:32px;height:1px;background:#6e6e6e;"></div>
<div class="a" style="left:2px;top:430px;width:32px;height:1px;background:#fff;"></div>
<div class="a" style="left:2px;top:449px;width:32px;height:1px;background:#6e6e6e;"></div>
<div class="a" style="left:2px;top:450px;width:32px;height:1px;background:#fff;"></div>
<div class="a" style="left:2px;top:469px;width:32px;height:1px;background:#6e6e6e;"></div>
<div class="a" style="left:2px;top:470px;width:32px;height:1px;background:#fff;"></div>
<div class="a" style="left:2px;top:489px;width:32px;height:1px;background:#6e6e6e;"></div>
<div class="a" style="left:2px;top:490px;width:32px;height:1px;background:#fff;"></div>
<div class="a" style="left:2px;top:509px;width:32px;height:1px;background:#6e6e6e;"></div>
<div class="a" style="left:2px;top:510px;width:32px;height:1px;background:#fff;"></div>
<div class="a" style="left:2px;top:529px;width:32px;height:1px;background:#6e6e6e;"></div>
<div class="a" style="left:2px;top:530px;width:32px;height:1px;background:#fff;"></div>
<div class="a" style="left:2px;top:549px;width:32px;height:1px;background:#6e6e6e;"></div>
<div class="a" style="left:2px;top:550px;width:32px;height:1px;background:#fff;"></div>
<div class="a" style="left:2px;top:569px;width:32px;height:1px;background:#6e6e6e;"></div>
<div class="a" style="left:2px;top:570px;width:32px;height:1px;background:#fff;"></div>
<div class="a" style="left:2px;top:589px;width:32px;height:1px;background:#6e6e6e;"></div>
<div class="a" style="left:2px;top:590px;width:32px;height:1px;background:#fff;"></div>
<div class="a" style="left:2px;top:609px;width:32px;height:1px;background:#6e6e6e;"></div>
<div class="a" style="left:2px;top:610px;width:32px;height:1px;background:#fff;"></div>
<div class="a" style="left:2px;top:629px;width:32px;height:1px;background:#6e6e6e;"></div>
<div class="a" style="left:2px;top:630px;width:32px;height:1px;background:#fff;"></div>
<div class="a" style="left:2px;top:649px;width:32px;height:1px;background:#6e6e6e;"></div>
<div class="a" style="left:2px;top:650px;width:32px;height:1px;background:#fff;"></div>
<div class="a" style="left:2px;top:669px;width:32px;height:1px;background:#6e6e6e;"></div>
<div class="a" style="left:2px;top:670px;width:32px;height:1px;background:#fff;"></div>
<div class="a" style="left:2px;top:689px;width:32px;height:1px;background:#6e6e6e;"></div>
<div class="a" style="left:2px;top:690px;width:32px;height:1px;background:#fff;"></div>
<div class="a" style="left:2px;top:709px;width:32px;height:1px;background:#6e6e6e;"></div>
<div class="a" style="left:2px;top:710px;width:32px;height:1px;background:#fff;"></div>
<div class="a" style="left:2px;top:729px;width:32px;height:1px;background:#6e6e6e;"></div>
<div class="a" style="left:2px;top:730px;width:32px;height:1px;background:#fff;"></div>
<div class="a" style="left:2px;top:749px;width:32px;height:1px;background:#6e6e6e;"></div>
<div class="a" style="left:2px;top:750px;width:32px;height:1px;background:#fff;"></div>
<div class="a" style="left:2px;top:769px;width:32px;height:1px;background:#6e6e6e;"></div>
<div class="a" style="left:2px;top:770px;width:32px;height:1px;background:#fff;"></div>
<div class="a" style="left:2px;top:789px;width:32px;height:1px;background:#6e6e6e;"></div>
<div class="a" style="left:2px;top:790px;width:32px;height:1px;background:#fff;"></div>
<div class="a" style="left:2px;top:809px;width:32px;height:1px;background:#6e6e6e;"></div>
<div class="a" style="left:2px;top:810px;width:32px;height:1px;background:#fff;"></div>
<div class="a" style="left:260px;top:140px;width:77px;height:20px;background:linear-gradient(#80bfff 0,#80bfff 45%,#3399ff 55%,#3399ff 100%)"></div>
<div class="a" style="left:2px;top:160px;width:32px;height:17px;background:linear-gradient(90deg,#80bfff 0,#80bfff 45%,#3399ff 55%,#3399ff 100%)"></div>
<div class="a t" style="top:144.50px;font-size:12.4px;line-height:12.4px;color:#000;font-family:'Liberation Sans',sans-serif;left:-228.2px;width:600px;text-align:center;">A</div>
<div class="a t" style="top:144.50px;font-size:12.4px;line-height:12.4px;color:#000;font-family:'Liberation Sans',sans-serif;left:-153.7px;width:600px;text-align:center;">B</div>
<div class="a t" style="top:144.50px;font-size:12.4px;line-height:12.4px;color:#000;font-family:'Liberation Sans',sans-serif;left:-76.69999999999999px;width:600px;text-align:center;">C</div>
<div class="a t" style="top:144.50px;font-size:12.4px;line-height:12.4px;color:#fff;font-family:'Liberation Sans',sans-serif;left:0.30000000000001137px;width:600px;text-align:center;">D</div>
<div class="a t" style="top:144.50px;font-size:12.4px;line-height:12.4px;color:#000;font-family:'Liberation Sans',sans-serif;left:83.80000000000001px;width:600px;text-align:center;">E</div>
<div class="a t" style="top:144.50px;font-size:12.4px;line-height:12.4px;color:#000;font-family:'Liberation Sans',sans-serif;left:173.8px;width:600px;text-align:center;">F</div>
<div class="a t" style="top:144.50px;font-size:12.4px;line-height:12.4px;color:#000;font-family:'Liberation Sans',sans-serif;left:263.79999999999995px;width:600px;text-align:center;">G</div>
<div class="a t" style="top:144.50px;font-size:12.4px;line-height:12.4px;color:#000;font-family:'Liberation Sans',sans-serif;left:353.79999999999995px;width:600px;text-align:center;">H</div>
<div class="a t" style="top:144.50px;font-size:12.4px;line-height:12.4px;color:#000;font-family:'Liberation Sans',sans-serif;left:443.79999999999995px;width:600px;text-align:center;">I</div>
<div class="a t" style="top:144.50px;font-size:12.4px;line-height:12.4px;color:#000;font-family:'Liberation Sans',sans-serif;left:533.8px;width:600px;text-align:center;">J</div>
<div class="a t" style="top:144.50px;font-size:12.4px;line-height:12.4px;color:#000;font-family:'Liberation Sans',sans-serif;left:617.3px;width:600px;text-align:center;">K</div>
<div class="a t" style="top:144.50px;font-size:12.4px;line-height:12.4px;color:#000;font-family:'Liberation Sans',sans-serif;left:688.3px;width:600px;text-align:center;">L</div>
<div class="a t" style="top:144.50px;font-size:12.4px;line-height:12.4px;color:#000;font-family:'Liberation Sans',sans-serif;left:761.3px;width:600px;text-align:center;">M</div>
<div class="a t" style="top:144.50px;font-size:12.4px;line-height:12.4px;color:#000;font-family:'Liberation Sans',sans-serif;left:842.3px;width:600px;text-align:center;">N</div>
<div class="a" style="left:2px;top:160px;width:32px;height:16px;overflow:hidden">
<div class="a t" style="top:3.10px;font-size:12.4px;line-height:12.4px;color:#fff;font-family:'Liberation Sans',sans-serif;left:-284px;width:600px;text-align:center;">1</div>
</div>
<div class="a" style="left:2px;top:177px;width:32px;height:8px;overflow:hidden">
<div class="a t" style="top:-0.90px;font-size:12.4px;line-height:12.4px;color:#000;font-family:'Liberation Sans',sans-serif;left:-284px;width:600px;text-align:center;">2</div>
</div>
<div class="a" style="left:2px;top:186px;width:32px;height:16px;overflow:hidden">
<div class="a t" style="top:3.10px;font-size:12.4px;line-height:12.4px;color:#000;font-family:'Liberation Sans',sans-serif;left:-284px;width:600px;text-align:center;">3</div>
</div>
<div class="a" style="left:2px;top:203px;width:32px;height:17px;overflow:hidden">
<div class="a t" style="top:3.60px;font-size:12.4px;line-height:12.4px;color:#000;font-family:'Liberation Sans',sans-serif;left:-284px;width:600px;text-align:center;">4</div>
</div>
<div class="a" style="left:2px;top:221px;width:32px;height:12px;overflow:hidden">
<div class="a t" style="top:1.10px;font-size:12.4px;line-height:12.4px;color:#000;font-family:'Liberation Sans',sans-serif;left:-284px;width:600px;text-align:center;">5</div>
</div>
<div class="a" style="left:2px;top:234px;width:32px;height:19px;overflow:hidden">
<div class="a t" style="top:4.60px;font-size:12.4px;line-height:12.4px;color:#000;font-family:'Liberation Sans',sans-serif;left:-284px;width:600px;text-align:center;">6</div>
</div>
<div class="a" style="left:2px;top:254px;width:32px;height:15px;overflow:hidden">
<div class="a t" style="top:2.60px;font-size:12.4px;line-height:12.4px;color:#000;font-family:'Liberation Sans',sans-serif;left:-284px;width:600px;text-align:center;">7</div>
</div>
<div class="a" style="left:2px;top:270px;width:32px;height:19px;overflow:hidden">
<div class="a t" style="top:4.60px;font-size:12.4px;line-height:12.4px;color:#000;font-family:'Liberation Sans',sans-serif;left:-284px;width:600px;text-align:center;">8</div>
</div>
<div class="a" style="left:2px;top:290px;width:32px;height:19px;overflow:hidden">
<div class="a t" style="top:4.60px;font-size:12.4px;line-height:12.4px;color:#000;font-family:'Liberation Sans',sans-serif;left:-284px;width:600px;text-align:center;">9</div>
</div>
<div class="a" style="left:2px;top:310px;width:32px;height:19px;overflow:hidden">
<div class="a t" style="top:4.60px;font-size:12.4px;line-height:12.4px;color:#000;font-family:'Liberation Sans',sans-serif;left:-284px;width:600px;text-align:center;">10</div>
</div>
<div class="a" style="left:2px;top:330px;width:32px;height:19px;overflow:hidden">
<div class="a t" style="top:4.60px;font-size:12.4px;line-height:12.4px;color:#000;font-family:'Liberation Sans',sans-serif;left:-284px;width:600px;text-align:center;">11</div>
</div>
<div class="a" style="left:2px;top:350px;width:32px;height:19px;overflow:hidden">
<div class="a t" style="top:4.60px;font-size:12.4px;line-height:12.4px;color:#000;font-family:'Liberation Sans',sans-serif;left:-284px;width:600px;text-align:center;">12</div>
</div>
<div class="a" style="left:2px;top:370px;width:32px;height:19px;overflow:hidden">
<div class="a t" style="top:4.60px;font-size:12.4px;line-height:12.4px;color:#000;font-family:'Liberation Sans',sans-serif;left:-284px;width:600px;text-align:center;">13</div>
</div>
<div class="a" style="left:2px;top:390px;width:32px;height:19px;overflow:hidden">
<div class="a t" style="top:4.60px;font-size:12.4px;line-height:12.4px;color:#000;font-family:'Liberation Sans',sans-serif;left:-284px;width:600px;text-align:center;">14</div>
</div>
<div class="a" style="left:2px;top:410px;width:32px;height:19px;overflow:hidden">
<div class="a t" style="top:4.60px;font-size:12.4px;line-height:12.4px;color:#000;font-family:'Liberation Sans',sans-serif;left:-284px;width:600px;text-align:center;">15</div>
</div>
<div class="a" style="left:2px;top:430px;width:32px;height:19px;overflow:hidden">
<div class="a t" style="top:4.60px;font-size:12.4px;line-height:12.4px;color:#000;font-family:'Liberation Sans',sans-serif;left:-284px;width:600px;text-align:center;">16</div>
</div>
<div class="a" style="left:2px;top:450px;width:32px;height:19px;overflow:hidden">
<div class="a t" style="top:4.60px;font-size:12.4px;line-height:12.4px;color:#000;font-family:'Liberation Sans',sans-serif;left:-284px;width:600px;text-align:center;">17</div>
</div>
<div class="a" style="left:2px;top:470px;width:32px;height:19px;overflow:hidden">
<div class="a t" style="top:4.60px;font-size:12.4px;line-height:12.4px;color:#000;font-family:'Liberation Sans',sans-serif;left:-284px;width:600px;text-align:center;">18</div>
</div>
<div class="a" style="left:2px;top:490px;width:32px;height:19px;overflow:hidden">
<div class="a t" style="top:4.60px;font-size:12.4px;line-height:12.4px;color:#000;font-family:'Liberation Sans',sans-serif;left:-284px;width:600px;text-align:center;">19</div>
</div>
<div class="a" style="left:2px;top:510px;width:32px;height:19px;overflow:hidden">
<div class="a t" style="top:4.60px;font-size:12.4px;line-height:12.4px;color:#000;font-family:'Liberation Sans',sans-serif;left:-284px;width:600px;text-align:center;">20</div>
</div>
<div class="a" style="left:2px;top:530px;width:32px;height:19px;overflow:hidden">
<div class="a t" style="top:4.60px;font-size:12.4px;line-height:12.4px;color:#000;font-family:'Liberation Sans',sans-serif;left:-284px;width:600px;text-align:center;">21</div>
</div>
<div class="a" style="left:2px;top:550px;width:32px;height:19px;overflow:hidden">
<div class="a t" style="top:4.60px;font-size:12.4px;line-height:12.4px;color:#000;font-family:'Liberation Sans',sans-serif;left:-284px;width:600px;text-align:center;">22</div>
</div>
<div class="a" style="left:2px;top:570px;width:32px;height:19px;overflow:hidden">
<div class="a t" style="top:4.60px;font-size:12.4px;line-height:12.4px;color:#000;font-family:'Liberation Sans',sans-serif;left:-284px;width:600px;text-align:center;">23</div>
</div>
<div class="a" style="left:2px;top:590px;width:32px;height:19px;overflow:hidden">
<div class="a t" style="top:4.60px;font-size:12.4px;line-height:12.4px;color:#000;font-family:'Liberation Sans',sans-serif;left:-284px;width:600px;text-align:center;">24</div>
</div>
<div class="a" style="left:2px;top:610px;width:32px;height:19px;overflow:hidden">
<div class="a t" style="top:4.60px;font-size:12.4px;line-height:12.4px;color:#000;font-family:'Liberation Sans',sans-serif;left:-284px;width:600px;text-align:center;">25</div>
</div>
<div class="a" style="left:2px;top:630px;width:32px;height:19px;overflow:hidden">
<div class="a t" style="top:4.60px;font-size:12.4px;line-height:12.4px;color:#000;font-family:'Liberation Sans',sans-serif;left:-284px;width:600px;text-align:center;">26</div>
</div>
<div class="a" style="left:2px;top:650px;width:32px;height:19px;overflow:hidden">
<div class="a t" style="top:4.60px;font-size:12.4px;line-height:12.4px;color:#000;font-family:'Liberation Sans',sans-serif;left:-284px;width:600px;text-align:center;">27</div>
</div>
<div class="a" style="left:2px;top:670px;width:32px;height:19px;overflow:hidden">
<div class="a t" style="top:4.60px;font-size:12.4px;line-height:12.4px;color:#000;font-family:'Liberation Sans',sans-serif;left:-284px;width:600px;text-align:center;">28</div>
</div>
<div class="a" style="left:2px;top:690px;width:32px;height:19px;overflow:hidden">
<div class="a t" style="top:4.60px;font-size:12.4px;line-height:12.4px;color:#000;font-family:'Liberation Sans',sans-serif;left:-284px;width:600px;text-align:center;">29</div>
</div>
<div class="a" style="left:2px;top:710px;width:32px;height:19px;overflow:hidden">
<div class="a t" style="top:4.60px;font-size:12.4px;line-height:12.4px;color:#000;font-family:'Liberation Sans',sans-serif;left:-284px;width:600px;text-align:center;">30</div>
</div>
<div class="a" style="left:2px;top:730px;width:32px;height:19px;overflow:hidden">
<div class="a t" style="top:4.60px;font-size:12.4px;line-height:12.4px;color:#000;font-family:'Liberation Sans',sans-serif;left:-284px;width:600px;text-align:center;">31</div>
</div>
<div class="a" style="left:2px;top:750px;width:32px;height:19px;overflow:hidden">
<div class="a t" style="top:4.60px;font-size:12.4px;line-height:12.4px;color:#000;font-family:'Liberation Sans',sans-serif;left:-284px;width:600px;text-align:center;">32</div>
</div>
<div class="a" style="left:2px;top:770px;width:32px;height:19px;overflow:hidden">
<div class="a t" style="top:4.60px;font-size:12.4px;line-height:12.4px;color:#000;font-family:'Liberation Sans',sans-serif;left:-284px;width:600px;text-align:center;">33</div>
</div>
<div class="a" style="left:2px;top:790px;width:32px;height:19px;overflow:hidden">
<div class="a t" style="top:4.60px;font-size:12.4px;line-height:12.4px;color:#000;font-family:'Liberation Sans',sans-serif;left:-284px;width:600px;text-align:center;">34</div>
</div>
<div class="a" style="left:2px;top:810px;width:32px;height:10px;overflow:hidden">
<div class="a t" style="top:4.60px;font-size:12.4px;line-height:12.4px;color:#000;font-family:'Liberation Sans',sans-serif;left:-284px;width:600px;text-align:center;">35</div>
</div>
<div class="a" style="left:35px;top:203px;width:984px;height:17px;background:#e6e6ff;"></div>
<div class="a" style="left:428px;top:234px;width:90px;height:586px;background:#9999ff;"></div>
<div class="a" style="left:518px;top:234px;width:90px;height:586px;background:#99ffcc;"></div>
<div class="a" style="left:608px;top:234px;width:89px;height:586px;background:#cccccc;"></div>
<div class="a" style="left:955px;top:234px;width:64px;height:586px;background:#ccffcc;"></div>
<div class="a" style="left:35px;top:185px;width:985px;height:1px;background:#000;"></div>
<div class="a" style="left:35px;top:202px;width:985px;height:1px;background:#000;"></div>
<div class="a" style="left:35px;top:220px;width:985px;height:1px;background:#000;"></div>
<div class="a" style="left:1019px;top:185px;width:1px;height:36px;background:#000;"></div>
<div class="a" style="left:183px;top:202px;width:1px;height:19px;background:#000;"></div>
<div class="a" style="left:337px;top:202px;width:1px;height:19px;background:#000;"></div>
<div class="a" style="left:427px;top:202px;width:1px;height:19px;background:#000;"></div>
<div class="a" style="left:517px;top:202px;width:1px;height:19px;background:#000;"></div>
<div class="a" style="left:607px;top:202px;width:1px;height:19px;background:#000;"></div>
<div class="a" style="left:697px;top:202px;width:1px;height:19px;background:#000;"></div>
<div class="a" style="left:787px;top:202px;width:1px;height:19px;background:#000;"></div>
<div class="a" style="left:877px;top:202px;width:1px;height:19px;background:#000;"></div>
<div class="a" style="left:954px;top:202px;width:1px;height:19px;background:#000;"></div>
<div class="a" style="left:180px;top:203px;width:3px;height:3px;background:#ff0000;"></div>
<div class="a" style="left:424px;top:203px;width:3px;height:3px;background:#ff0000;"></div>
<div class="a" style="left:604px;top:203px;width:3px;height:3px;background:#ff0000;"></div>
<div class="a" style="left:784px;top:203px;width:3px;height:3px;background:#ff0000;"></div>
<div class="a" style="left:35px;top:232px;width:986px;height:1px;background:#000;"></div>
<div class="a" style="left:35px;top:235px;width:69px;height:32px;border:1px solid #000;"></div>
<div class="a" style="left:107px;top:235px;width:74px;height:32px;border:1px solid #000;"></div>
<div class="a" style="left:184px;top:235px;width:74px;height:32px;border:1px solid #000;"></div>
<div class="a" style="left:261px;top:235px;width:74px;height:32px;border:1px solid #000;"></div>
<div class="a" style="left:338px;top:235px;width:87px;height:32px;border:1px solid #000;"></div>
<div class="a" style="left:428px;top:235px;width:87px;height:32px;border:1px solid #000;"></div>
<div class="a" style="left:518px;top:235px;width:87px;height:32px;border:1px solid #000;"></div>
<div class="a" style="left:608px;top:235px;width:87px;height:32px;border:1px solid #000;"></div>
<div class="a" style="left:698px;top:235px;width:87px;height:32px;border:1px solid #000;"></div>
<div class="a" style="left:788px;top:235px;width:164px;height:16px;border:1px solid #000;"></div>
<div class="a" style="left:788px;top:255px;width:87px;height:12px;border:1px solid #000;"></div>
<div class="a" style="left:878px;top:255px;width:74px;height:12px;border:1px solid #000;"></div>
<div class="a" style="left:955px;top:235px;width:62px;height:32px;border:1px solid #000;"></div>
<div class="a" style="left:1020px;top:232px;width:1px;height:40px;background:#000;"></div>
<div class="a" style="left:35px;top:271px;width:986px;height:1px;background:#000;"></div>
<div class="a" style="left:35px;top:289px;width:985px;height:1px;background:#000;"></div>
<div class="a" style="left:35px;top:309px;width:985px;height:1px;background:#000;"></div>
<div class="a" style="left:35px;top:329px;width:985px;height:1px;background:#000;"></div>
<div class="a" style="left:35px;top:349px;width:985px;height:1px;background:#000;"></div>
<div class="a" style="left:35px;top:369px;width:985px;height:1px;background:#000;"></div>
<div class="a" style="left:35px;top:389px;width:985px;height:1px;background:#000;"></div>
<div class="a" style="left:35px;top:409px;width:985px;height:1px;background:#000;"></div>
<div class="a" style="left:35px;top:429px;width:985px;height:1px;background:#000;"></div>
<div class="a" style="left:35px;top:449px;width:985px;height:1px;background:#000;"></div>
<div class="a" style="left:35px;top:469px;width:985px;height:1px;background:#000;"></div>
<div class="a" style="left:35px;top:489px;width:985px;height:1px;background:#000;"></div>
<div class="a" style="left:35px;top:509px;width:985px;height:1px;background:#000;"></div>
<div class="a" style="left:35px;top:529px;width:985px;height:1px;background:#000;"></div>
<div class="a" style="left:35px;top:549px;width:985px;height:1px;background:#000;"></div>
<div class="a" style="left:35px;top:569px;width:985px;height:1px;background:#000;"></div>
<div class="a" style="left:35px;top:589px;width:985px;height:1px;background:#000;"></div>
<div class="a" style="left:35px;top:609px;width:985px;height:1px;background:#000;"></div>
<div class="a" style="left:35px;top:629px;width:985px;height:1px;background:#000;"></div>
<div class="a" style="left:35px;top:649px;width:985px;height:1px;background:#000;"></div>
<div class="a" style="left:35px;top:669px;width:985px;height:1px;background:#000;"></div>
<div class="a" style="left:35px;top:689px;width:985px;height:1px;background:#000;"></div>
<div class="a" style="left:35px;top:709px;width:985px;height:1px;background:#000;"></div>
<div class="a" style="left:35px;top:729px;width:985px;height:1px;background:#000;"></div>
<div class="a" style="left:35px;top:749px;width:985px;height:1px;background:#000;"></div>
<div class="a" style="left:35px;top:769px;width:985px;height:1px;background:#000;"></div>
<div class="a" style="left:35px;top:789px;width:985px;height:1px;background:#000;"></div>
<div class="a" style="left:35px;top:809px;width:985px;height:1px;background:#000;"></div>
<div class="a" style="left:106px;top:272px;width:1px;height:548px;background:#000;"></div>
<div class="a" style="left:183px;top:272px;width:1px;height:548px;background:#000;"></div>
<div class="a" style="left:260px;top:272px;width:1px;height:548px;background:#000;"></div>
<div class="a" style="left:337px;top:272px;width:1px;height:548px;background:#000;"></div>
<div class="a" style="left:427px;top:272px;width:1px;height:548px;background:#000;"></div>
<div class="a" style="left:517px;top:272px;width:1px;height:548px;background:#000;"></div>
<div class="a" style="left:607px;top:272px;width:1px;height:548px;background:#000;"></div>
<div class="a" style="left:697px;top:272px;width:1px;height:548px;background:#000;"></div>
<div class="a" style="left:787px;top:272px;width:1px;height:548px;background:#000;"></div>
<div class="a" style="left:877px;top:272px;width:1px;height:548px;background:#000;"></div>
<div class="a" style="left:954px;top:272px;width:1px;height:548px;background:#000;"></div>
<div class="a" style="left:1019px;top:272px;width:1px;height:548px;background:#000;"></div>
<div class="a t" style="top:161.50px;font-size:13px;line-height:13px;color:#ff3333;font-family:'Liberation Sans',sans-serif;font-weight:bold;font-style:italic;left:-228.7px;width:600px;text-align:center;">Jahr:</div>
<div class="a t" style="top:161.50px;font-size:13px;line-height:13px;color:#ff3333;font-family:'Liberation Sans',sans-serif;font-weight:bold;font-style:italic;left:-155px;width:600px;text-align:center;">2017</div>
<div class="a t" style="top:161.50px;font-size:13px;line-height:13px;color:#000;font-family:'Liberation Sans',sans-serif;font-weight:bold;font-style:italic;left:-78px;width:600px;text-align:center;">Monat:</div>
<div class="a t" style="top:157.96px;font-size:16px;line-height:16px;color:#000;font-family:'Liberation Sans',sans-serif;font-weight:bold;left:455.5px;">Stundennachweis</div>
<div class="a t" style="top:186.51px;font-size:14.67px;line-height:14.67px;color:#0000ff;font-family:'Liberation Serif',serif;font-weight:bold;left:480.5px;">Gesammte Stunden/Tage</div>
<div class="a t" style="top:205.19px;font-size:13.6px;line-height:13.6px;color:#669900;font-family:'Liberation Sans',sans-serif;letter-spacing:0.2px;left:35.5px;-webkit-text-stroke:0.4px #669900">ZA Konto:</div>
<div class="a t" style="top:205.19px;font-size:13.6px;line-height:13.6px;color:#669900;font-family:'Liberation Sans',sans-serif;transform:scaleX(0.92);transform-origin:0 0;left:120px;-webkit-text-stroke:0.4px #669900">00:00</div>
<div class="a t" style="top:204.71px;font-size:14.67px;line-height:14.67px;color:#000;font-family:'Liberation Serif',serif;font-weight:bold;transform:scaleX(0.92);transform-origin:300px 0;left:81.89999999999998px;width:600px;text-align:center;">00:00</div>
<div class="a t" style="top:204.71px;font-size:14.67px;line-height:14.67px;color:#000;font-family:'Liberation Serif',serif;font-weight:bold;transform:scaleX(0.92);transform-origin:300px 0;left:171.89999999999998px;width:600px;text-align:center;">00:00</div>
<div class="a t" style="top:204.71px;font-size:14.67px;line-height:14.67px;color:#000;font-family:'Liberation Serif',serif;font-weight:bold;transform:scaleX(0.92);transform-origin:300px 0;left:261.9px;width:600px;text-align:center;">00:00</div>
<div class="a t" style="top:204.71px;font-size:14.67px;line-height:14.67px;color:#ff3333;font-family:'Liberation Serif',serif;font-weight:bold;transform:scaleX(0.92);transform-origin:300px 0;left:351.9px;width:600px;text-align:center;">00:00</div>
<div class="a t" style="top:204.71px;font-size:14.67px;line-height:14.67px;color:#0000ff;font-family:'Liberation Serif',serif;font-weight:bold;transform:scaleX(0.92);transform-origin:300px 0;left:441.9px;width:600px;text-align:center;">00:00</div>
<div class="a t" style="top:204.71px;font-size:14.67px;line-height:14.67px;color:#000;font-family:'Liberation Serif',serif;font-weight:bold;transform:scaleX(0.92);transform-origin:300px 0;left:531.9px;width:600px;text-align:center;">00:00</div>
<div class="a t" style="top:204.71px;font-size:14.67px;line-height:14.67px;color:#000;font-family:'Liberation Serif',serif;font-weight:bold;transform:scaleX(0.92);transform-origin:300px 0;left:614.9px;width:600px;text-align:center;">0</div>
<div class="a t" style="top:238.80px;font-size:13.7px;line-height:13.7px;color:#000;font-family:'Liberation Sans',sans-serif;font-weight:bold;transform:scaleX(0.935);transform-origin:300px 0;left:-229.5px;width:600px;text-align:center;">Datum</div>
<div class="a t" style="top:238.80px;font-size:13.7px;line-height:13.7px;color:#000;font-family:'Liberation Sans',sans-serif;font-weight:bold;transform:scaleX(0.935);transform-origin:300px 0;left:-155px;width:600px;text-align:center;">Kommen</div>
<div class="a t" style="top:238.80px;font-size:13.7px;line-height:13.7px;color:#000;font-family:'Liberation Sans',sans-serif;font-weight:bold;transform:scaleX(0.935);transform-origin:300px 0;left:-78px;width:600px;text-align:center;">Pause</div>
<div class="a t" style="top:238.80px;font-size:13.7px;line-height:13.7px;color:#000;font-family:'Liberation Sans',sans-serif;font-weight:bold;transform:scaleX(0.935);transform-origin:300px 0;left:-1px;width:600px;text-align:center;">Gehen</div>
<div class="a t" style="top:238.80px;font-size:13.7px;line-height:13.7px;color:#000;font-family:'Liberation Sans',sans-serif;font-weight:bold;transform:scaleX(0.935);transform-origin:300px 0;left:82.5px;width:600px;text-align:center;">Soll/Norm</div>
<div class="a t" style="top:254.80px;font-size:13.7px;line-height:13.7px;color:#000;font-family:'Liberation Sans',sans-serif;font-weight:bold;transform:scaleX(0.935);transform-origin:300px 0;left:82.5px;width:600px;text-align:center;">Std</div>
<div class="a t" style="top:238.80px;font-size:13.7px;line-height:13.7px;color:#fff;font-family:'Liberation Sans',sans-serif;font-weight:bold;transform:scaleX(0.935);transform-origin:300px 0;left:173px;width:600px;text-align:center;">Geleistete</div>
<div class="a t" style="top:254.80px;font-size:13.7px;line-height:13.7px;color:#fff;font-family:'Liberation Sans',sans-serif;font-weight:bold;transform:scaleX(0.935);transform-origin:300px 0;left:173px;width:600px;text-align:center;">Std</div>
<div class="a t" style="top:238.80px;font-size:13.7px;line-height:13.7px;color:#000;font-family:'Liberation Sans',sans-serif;font-weight:bold;transform:scaleX(0.935);transform-origin:300px 0;left:262.5px;width:600px;text-align:center;">Überstunden</div>
<div class="a t" style="top:238.80px;font-size:13.7px;line-height:13.7px;color:#ff3333;font-family:'Liberation Sans',sans-serif;font-weight:bold;transform:scaleX(0.935);transform-origin:300px 0;left:352.5px;width:600px;text-align:center;">Fehlstunden</div>
<div class="a t" style="top:238.80px;font-size:13.7px;line-height:13.7px;color:#0000ff;font-family:'Liberation Sans',sans-serif;font-weight:bold;transform:scaleX(0.935);transform-origin:300px 0;left:442.5px;width:600px;text-align:center;">Gezahlte</div>
<div class="a t" style="top:254.80px;font-size:13.7px;line-height:13.7px;color:#0000ff;font-family:'Liberation Sans',sans-serif;font-weight:bold;transform:scaleX(0.935);transform-origin:300px 0;left:442.5px;width:600px;text-align:center;">Überstunden</div>
<div class="a t" style="top:238.80px;font-size:13.7px;line-height:13.7px;color:#000;font-family:'Liberation Sans',sans-serif;font-weight:bold;transform:scaleX(0.935);transform-origin:300px 0;left:572.5px;width:600px;text-align:center;">Urlaub</div>
<div class="a t" style="top:238.80px;font-size:13.7px;line-height:13.7px;color:#ff3333;font-family:'Liberation Sans',sans-serif;font-weight:bold;transform:scaleX(0.935);transform-origin:300px 0;left:687px;width:600px;text-align:center;">Status</div>
<div class="a t" style="top:254.80px;font-size:13.7px;line-height:13.7px;color:#000;font-family:'Liberation Sans',sans-serif;font-weight:bold;transform:scaleX(0.935);transform-origin:300px 0;left:532.5px;width:600px;text-align:center;">Std</div>
<div class="a t" style="top:254.80px;font-size:13.7px;line-height:13.7px;color:#000;font-family:'Liberation Sans',sans-serif;font-weight:bold;transform:scaleX(0.935);transform-origin:300px 0;left:616px;width:600px;text-align:center;">Tag</div>
<div class="a" style="left:0;top:0;width:1192px;height:820px;overflow:hidden">
<div class="a t" style="top:273.71px;font-size:14.67px;line-height:14.67px;color:#fff;font-family:'Liberation Serif',serif;font-weight:bold;transform:scaleX(0.92);transform-origin:300px 0;left:172px;width:600px;text-align:center;">00:00</div>
<div class="a t" style="top:273.71px;font-size:14.67px;line-height:14.67px;color:#000;font-family:'Liberation Serif',serif;font-weight:bold;transform:scaleX(0.92);transform-origin:300px 0;left:262px;width:600px;text-align:center;">00:00</div>
<div class="a t" style="top:273.71px;font-size:14.67px;line-height:14.67px;color:#ff3333;font-family:'Liberation Serif',serif;font-weight:bold;transform:scaleX(0.92);transform-origin:300px 0;left:352px;width:600px;text-align:center;">00:00</div>
<div class="a t" style="top:295.26px;font-size:13.4px;line-height:13.4px;color:#000;font-family:'Liberation Sans',sans-serif;font-weight:bold;transform:scaleX(0.92);transform-origin:300px 0;left:-229.4px;width:600px;text-align:center;">Err:504</div>
<div class="a t" style="top:293.71px;font-size:14.67px;line-height:14.67px;color:#fff;font-family:'Liberation Serif',serif;font-weight:bold;transform:scaleX(0.92);transform-origin:300px 0;left:172px;width:600px;text-align:center;">00:00</div>
<div class="a t" style="top:293.71px;font-size:14.67px;line-height:14.67px;color:#000;font-family:'Liberation Serif',serif;font-weight:bold;transform:scaleX(0.92);transform-origin:300px 0;left:262px;width:600px;text-align:center;">00:00</div>
<div class="a t" style="top:293.71px;font-size:14.67px;line-height:14.67px;color:#ff3333;font-family:'Liberation Serif',serif;font-weight:bold;transform:scaleX(0.92);transform-origin:300px 0;left:352px;width:600px;text-align:center;">00:00</div>
<div class="a t" style="top:315.26px;font-size:13.4px;line-height:13.4px;color:#000;font-family:'Liberation Sans',sans-serif;font-weight:bold;transform:scaleX(0.92);transform-origin:300px 0;left:-229.4px;width:600px;text-align:center;">Err:504</div>
<div class="a t" style="top:313.71px;font-size:14.67px;line-height:14.67px;color:#fff;font-family:'Liberation Serif',serif;font-weight:bold;transform:scaleX(0.92);transform-origin:300px 0;left:172px;width:600px;text-align:center;">00:00</div>
<div class="a t" style="top:313.71px;font-size:14.67px;line-height:14.67px;color:#000;font-family:'Liberation Serif',serif;font-weight:bold;transform:scaleX(0.92);transform-origin:300px 0;left:262px;width:600px;text-align:center;">00:00</div>
<div class="a t" style="top:313.71px;font-size:14.67px;line-height:14.67px;color:#ff3333;font-family:'Liberation Serif',serif;font-weight:bold;transform:scaleX(0.92);transform-origin:300px 0;left:352px;width:600px;text-align:center;">00:00</div>
<div class="a t" style="top:335.26px;font-size:13.4px;line-height:13.4px;color:#000;font-family:'Liberation Sans',sans-serif;font-weight:bold;transform:scaleX(0.92);transform-origin:300px 0;left:-229.4px;width:600px;text-align:center;">Err:504</div>
<div class="a t" style="top:333.71px;font-size:14.67px;line-height:14.67px;color:#fff;font-family:'Liberation Serif',serif;font-weight:bold;transform:scaleX(0.92);transform-origin:300px 0;left:172px;width:600px;text-align:center;">00:00</div>
<div class="a t" style="top:333.71px;font-size:14.67px;line-height:14.67px;color:#000;font-family:'Liberation Serif',serif;font-weight:bold;transform:scaleX(0.92);transform-origin:300px 0;left:262px;width:600px;text-align:center;">00:00</div>
<div class="a t" style="top:333.71px;font-size:14.67px;line-height:14.67px;color:#ff3333;font-family:'Liberation Serif',serif;font-weight:bold;transform:scaleX(0.92);transform-origin:300px 0;left:352px;width:600px;text-align:center;">00:00</div>
<div class="a t" style="top:355.26px;font-size:13.4px;line-height:13.4px;color:#000;font-family:'Liberation Sans',sans-serif;font-weight:bold;transform:scaleX(0.92);transform-origin:300px 0;left:-229.4px;width:600px;text-align:center;">Err:504</div>
<div class="a t" style="top:353.71px;font-size:14.67px;line-height:14.67px;color:#fff;font-family:'Liberation Serif',serif;font-weight:bold;transform:scaleX(0.92);transform-origin:300px 0;left:172px;width:600px;text-align:center;">00:00</div>
<div class="a t" style="top:353.71px;font-size:14.67px;line-height:14.67px;color:#000;font-family:'Liberation Serif',serif;font-weight:bold;transform:scaleX(0.92);transform-origin:300px 0;left:262px;width:600px;text-align:center;">00:00</div>
<div class="a t" style="top:353.71px;font-size:14.67px;line-height:14.67px;color:#ff3333;font-family:'Liberation Serif',serif;font-weight:bold;transform:scaleX(0.92);transform-origin:300px 0;left:352px;width:600px;text-align:center;">00:00</div>
<div class="a t" style="top:375.26px;font-size:13.4px;line-height:13.4px;color:#000;font-family:'Liberation Sans',sans-serif;font-weight:bold;transform:scaleX(0.92);transform-origin:300px 0;left:-229.4px;width:600px;text-align:center;">Err:504</div>
<div class="a t" style="top:373.71px;font-size:14.67px;line-height:14.67px;color:#fff;font-family:'Liberation Serif',serif;font-weight:bold;transform:scaleX(0.92);transform-origin:300px 0;left:172px;width:600px;text-align:center;">00:00</div>
<div class="a t" style="top:373.71px;font-size:14.67px;line-height:14.67px;color:#000;font-family:'Liberation Serif',serif;font-weight:bold;transform:scaleX(0.92);transform-origin:300px 0;left:262px;width:600px;text-align:center;">00:00</div>
<div class="a t" style="top:373.71px;font-size:14.67px;line-height:14.67px;color:#ff3333;font-family:'Liberation Serif',serif;font-weight:bold;transform:scaleX(0.92);transform-origin:300px 0;left:352px;width:600px;text-align:center;">00:00</div>
<div class="a t" style="top:395.26px;font-size:13.4px;line-height:13.4px;color:#000;font-family:'Liberation Sans',sans-serif;font-weight:bold;transform:scaleX(0.92);transform-origin:300px 0;left:-229.4px;width:600px;text-align:center;">Err:504</div>
<div class="a t" style="top:393.71px;font-size:14.67px;line-height:14.67px;color:#fff;font-family:'Liberation Serif',serif;font-weight:bold;transform:scaleX(0.92);transform-origin:300px 0;left:172px;width:600px;text-align:center;">00:00</div>
<div class="a t" style="top:393.71px;font-size:14.67px;line-height:14.67px;color:#000;font-family:'Liberation Serif',serif;font-weight:bold;transform:scaleX(0.92);transform-origin:300px 0;left:262px;width:600px;text-align:center;">00:00</div>
<div class="a t" style="top:393.71px;font-size:14.67px;line-height:14.67px;color:#ff3333;font-family:'Liberation Serif',serif;font-weight:bold;transform:scaleX(0.92);transform-origin:300px 0;left:352px;width:600px;text-align:center;">00:00</div>
<div class="a t" style="top:415.26px;font-size:13.4px;line-height:13.4px;color:#000;font-family:'Liberation Sans',sans-serif;font-weight:bold;transform:scaleX(0.92);transform-origin:300px 0;left:-229.4px;width:600px;text-align:center;">Err:504</div>
<div class="a t" style="top:413.71px;font-size:14.67px;line-height:14.67px;color:#fff;font-family:'Liberation Serif',serif;font-weight:bold;transform:scaleX(0.92);transform-origin:300px 0;left:172px;width:600px;text-align:center;">00:00</div>
<div class="a t" style="top:413.71px;font-size:14.67px;line-height:14.67px;color:#000;font-family:'Liberation Serif',serif;font-weight:bold;transform:scaleX(0.92);transform-origin:300px 0;left:262px;width:600px;text-align:center;">00:00</div>
<div class="a t" style="top:413.71px;font-size:14.67px;line-height:14.67px;color:#ff3333;font-family:'Liberation Serif',serif;font-weight:bold;transform:scaleX(0.92);transform-origin:300px 0;left:352px;width:600px;text-align:center;">00:00</div>
<div class="a t" style="top:435.26px;font-size:13.4px;line-height:13.4px;color:#000;font-family:'Liberation Sans',sans-serif;font-weight:bold;transform:scaleX(0.92);transform-origin:300px 0;left:-229.4px;width:600px;text-align:center;">Err:504</div>
<div class="a t" style="top:433.71px;font-size:14.67px;line-height:14.67px;color:#fff;font-family:'Liberation Serif',serif;font-weight:bold;transform:scaleX(0.92);transform-origin:300px 0;left:172px;width:600px;text-align:center;">00:00</div>
<div class="a t" style="top:433.71px;font-size:14.67px;line-height:14.67px;color:#000;font-family:'Liberation Serif',serif;font-weight:bold;transform:scaleX(0.92);transform-origin:300px 0;left:262px;width:600px;text-align:center;">00:00</div>
<div class="a t" style="top:433.71px;font-size:14.67px;line-height:14.67px;color:#ff3333;font-family:'Liberation Serif',serif;font-weight:bold;transform:scaleX(0.92);transform-origin:300px 0;left:352px;width:600px;text-align:center;">00:00</div>
<div class="a t" style="top:455.26px;font-size:13.4px;line-height:13.4px;color:#000;font-family:'Liberation Sans',sans-serif;font-weight:bold;transform:scaleX(0.92);transform-origin:300px 0;left:-229.4px;width:600px;text-align:center;">Err:504</div>
<div class="a t" style="top:453.71px;font-size:14.67px;line-height:14.67px;color:#fff;font-family:'Liberation Serif',serif;font-weight:bold;transform:scaleX(0.92);transform-origin:300px 0;left:172px;width:600px;text-align:center;">00:00</div>
<div class="a t" style="top:453.71px;font-size:14.67px;line-height:14.67px;color:#000;font-family:'Liberation Serif',serif;font-weight:bold;transform:scaleX(0.92);transform-origin:300px 0;left:262px;width:600px;text-align:center;">00:00</div>
<div class="a t" style="top:453.71px;font-size:14.67px;line-height:14.67px;color:#ff3333;font-family:'Liberation Serif',serif;font-weight:bold;transform:scaleX(0.92);transform-origin:300px 0;left:352px;width:600px;text-align:center;">00:00</div>
<div class="a t" style="top:475.26px;font-size:13.4px;line-height:13.4px;color:#000;font-family:'Liberation Sans',sans-serif;font-weight:bold;transform:scaleX(0.92);transform-origin:300px 0;left:-229.4px;width:600px;text-align:center;">Err:504</div>
<div class="a t" style="top:473.71px;font-size:14.67px;line-height:14.67px;color:#fff;font-family:'Liberation Serif',serif;font-weight:bold;transform:scaleX(0.92);transform-origin:300px 0;left:172px;width:600px;text-align:center;">00:00</div>
<div class="a t" style="top:473.71px;font-size:14.67px;line-height:14.67px;color:#000;font-family:'Liberation Serif',serif;font-weight:bold;transform:scaleX(0.92);transform-origin:300px 0;left:262px;width:600px;text-align:center;">00:00</div>
<div class="a t" style="top:473.71px;font-size:14.67px;line-height:14.67px;color:#ff3333;font-family:'Liberation Serif',serif;font-weight:bold;transform:scaleX(0.92);transform-origin:300px 0;left:352px;width:600px;text-align:center;">00:00</div>
<div class="a t" style="top:495.26px;font-size:13.4px;line-height:13.4px;color:#000;font-family:'Liberation Sans',sans-serif;font-weight:bold;transform:scaleX(0.92);transform-origin:300px 0;left:-229.4px;width:600px;text-align:center;">Err:504</div>
<div class="a t" style="top:493.71px;font-size:14.67px;line-height:14.67px;color:#fff;font-family:'Liberation Serif',serif;font-weight:bold;transform:scaleX(0.92);transform-origin:300px 0;left:172px;width:600px;text-align:center;">00:00</div>
<div class="a t" style="top:493.71px;font-size:14.67px;line-height:14.67px;color:#000;font-family:'Liberation Serif',serif;font-weight:bold;transform:scaleX(0.92);transform-origin:300px 0;left:262px;width:600px;text-align:center;">00:00</div>
<div class="a t" style="top:493.71px;font-size:14.67px;line-height:14.67px;color:#ff3333;font-family:'Liberation Serif',serif;font-weight:bold;transform:scaleX(0.92);transform-origin:300px 0;left:352px;width:600px;text-align:center;">00:00</div>
<div class="a t" style="top:515.26px;font-size:13.4px;line-height:13.4px;color:#000;font-family:'Liberation Sans',sans-serif;font-weight:bold;transform:scaleX(0.92);transform-origin:300px 0;left:-229.4px;width:600px;text-align:center;">Err:504</div>
<div class="a t" style="top:513.71px;font-size:14.67px;line-height:14.67px;color:#fff;font-family:'Liberation Serif',serif;font-weight:bold;transform:scaleX(0.92);transform-origin:300px 0;left:172px;width:600px;text-align:center;">00:00</div>
<div class="a t" style="top:513.71px;font-size:14.67px;line-height:14.67px;color:#000;font-family:'Liberation Serif',serif;font-weight:bold;transform:scaleX(0.92);transform-origin:300px 0;left:262px;width:600px;text-align:center;">00:00</div>
<div class="a t" style="top:513.71px;font-size:14.67px;line-height:14.67px;color:#ff3333;font-family:'Liberation Serif',serif;font-weight:bold;transform:scaleX(0.92);transform-origin:300px 0;left:352px;width:600px;text-align:center;">00:00</div>
<div class="a t" style="top:535.26px;font-size:13.4px;line-height:13.4px;color:#000;font-family:'Liberation Sans',sans-serif;font-weight:bold;transform:scaleX(0.92);transform-origin:300px 0;left:-229.4px;width:600px;text-align:center;">Err:504</div>
<div class="a t" style="top:533.71px;font-size:14.67px;line-height:14.67px;color:#fff;font-family:'Liberation Serif',serif;font-weight:bold;transform:scaleX(0.92);transform-origin:300px 0;left:172px;width:600px;text-align:center;">00:00</div>
<div class="a t" style="top:533.71px;font-size:14.67px;line-height:14.67px;color:#000;font-family:'Liberation Serif',serif;font-weight:bold;transform:scaleX(0.92);transform-origin:300px 0;left:262px;width:600px;text-align:center;">00:00</div>
<div class="a t" style="top:533.71px;font-size:14.67px;line-height:14.67px;color:#ff3333;font-family:'Liberation Serif',serif;font-weight:bold;transform:scaleX(0.92);transform-origin:300px 0;left:352px;width:600px;text-align:center;">00:00</div>
<div class="a t" style="top:555.26px;font-size:13.4px;line-height:13.4px;color:#000;font-family:'Liberation Sans',sans-serif;font-weight:bold;transform:scaleX(0.92);transform-origin:300px 0;left:-229.4px;width:600px;text-align:center;">Err:504</div>
<div class="a t" style="top:553.71px;font-size:14.67px;line-height:14.67px;color:#fff;font-family:'Liberation Serif',serif;font-weight:bold;transform:scaleX(0.92);transform-origin:300px 0;left:172px;width:600px;text-align:center;">00:00</div>
<div class="a t" style="top:553.71px;font-size:14.67px;line-height:14.67px;color:#000;font-family:'Liberation Serif',serif;font-weight:bold;transform:scaleX(0.92);transform-origin:300px 0;left:262px;width:600px;text-align:center;">00:00</div>
<div class="a t" style="top:553.71px;font-size:14.67px;line-height:14.67px;color:#ff3333;font-family:'Liberation Serif',serif;font-weight:bold;transform:scaleX(0.92);transform-origin:300px 0;left:352px;width:600px;text-align:center;">00:00</div>
<div class="a t" style="top:575.26px;font-size:13.4px;line-height:13.4px;color:#000;font-family:'Liberation Sans',sans-serif;font-weight:bold;transform:scaleX(0.92);transform-origin:300px 0;left:-229.4px;width:600px;text-align:center;">Err:504</div>
<div class="a t" style="top:573.71px;font-size:14.67px;line-height:14.67px;color:#fff;font-family:'Liberation Serif',serif;font-weight:bold;transform:scaleX(0.92);transform-origin:300px 0;left:172px;width:600px;text-align:center;">00:00</div>
<div class="a t" style="top:573.71px;font-size:14.67px;line-height:14.67px;color:#000;font-family:'Liberation Serif',serif;font-weight:bold;transform:scaleX(0.92);transform-origin:300px 0;left:262px;width:600px;text-align:center;">00:00</div>
<div class="a t" style="top:573.71px;font-size:14.67px;line-height:14.67px;color:#ff3333;font-family:'Liberation Serif',serif;font-weight:bold;transform:scaleX(0.92);transform-origin:300px 0;left:352px;width:600px;text-align:center;">00:00</div>
<div class="a t" style="top:595.26px;font-size:13.4px;line-height:13.4px;color:#000;font-family:'Liberation Sans',sans-serif;font-weight:bold;transform:scaleX(0.92);transform-origin:300px 0;left:-229.4px;width:600px;text-align:center;">Err:504</div>
<div class="a t" style="top:593.71px;font-size:14.67px;line-height:14.67px;color:#fff;font-family:'Liberation Serif',serif;font-weight:bold;transform:scaleX(0.92);transform-origin:300px 0;left:172px;width:600px;text-align:center;">00:00</div>
<div class="a t" style="top:593.71px;font-size:14.67px;line-height:14.67px;color:#000;font-family:'Liberation Serif',serif;font-weight:bold;transform:scaleX(0.92);transform-origin:300px 0;left:262px;width:600px;text-align:center;">00:00</div>
<div class="a t" style="top:593.71px;font-size:14.67px;line-height:14.67px;color:#ff3333;font-family:'Liberation Serif',serif;font-weight:bold;transform:scaleX(0.92);transform-origin:300px 0;left:352px;width:600px;text-align:center;">00:00</div>
<div class="a t" style="top:615.26px;font-size:13.4px;line-height:13.4px;color:#000;font-family:'Liberation Sans',sans-serif;font-weight:bold;transform:scaleX(0.92);transform-origin:300px 0;left:-229.4px;width:600px;text-align:center;">Err:504</div>
<div class="a t" style="top:613.71px;font-size:14.67px;line-height:14.67px;color:#fff;font-family:'Liberation Serif',serif;font-weight:bold;transform:scaleX(0.92);transform-origin:300px 0;left:172px;width:600px;text-align:center;">00:00</div>
<div class="a t" style="top:613.71px;font-size:14.67px;line-height:14.67px;color:#000;font-family:'Liberation Serif',serif;font-weight:bold;transform:scaleX(0.92);transform-origin:300px 0;left:262px;width:600px;text-align:center;">00:00</div>
<div class="a t" style="top:613.71px;font-size:14.67px;line-height:14.67px;color:#ff3333;font-family:'Liberation Serif',serif;font-weight:bold;transform:scaleX(0.92);transform-origin:300px 0;left:352px;width:600px;text-align:center;">00:00</div>
<div class="a t" style="top:635.26px;font-size:13.4px;line-height:13.4px;color:#000;font-family:'Liberation Sans',sans-serif;font-weight:bold;transform:scaleX(0.92);transform-origin:300px 0;left:-229.4px;width:600px;text-align:center;">Err:504</div>
<div class="a t" style="top:633.71px;font-size:14.67px;line-height:14.67px;color:#fff;font-family:'Liberation Serif',serif;font-weight:bold;transform:scaleX(0.92);transform-origin:300px 0;left:172px;width:600px;text-align:center;">00:00</div>
<div class="a t" style="top:633.71px;font-size:14.67px;line-height:14.67px;color:#000;font-family:'Liberation Serif',serif;font-weight:bold;transform:scaleX(0.92);transform-origin:300px 0;left:262px;width:600px;text-align:center;">00:00</div>
<div class="a t" style="top:633.71px;font-size:14.67px;line-height:14.67px;color:#ff3333;font-family:'Liberation Serif',serif;font-weight:bold;transform:scaleX(0.92);transform-origin:300px 0;left:352px;width:600px;text-align:center;">00:00</div>
<div class="a t" style="top:655.26px;font-size:13.4px;line-height:13.4px;color:#000;font-family:'Liberation Sans',sans-serif;font-weight:bold;transform:scaleX(0.92);transform-origin:300px 0;left:-229.4px;width:600px;text-align:center;">Err:504</div>
<div class="a t" style="top:653.71px;font-size:14.67px;line-height:14.67px;color:#fff;font-family:'Liberation Serif',serif;font-weight:bold;transform:scaleX(0.92);transform-origin:300px 0;left:172px;width:600px;text-align:center;">00:00</div>
<div class="a t" style="top:653.71px;font-size:14.67px;line-height:14.67px;color:#000;font-family:'Liberation Serif',serif;font-weight:bold;transform:scaleX(0.92);transform-origin:300px 0;left:262px;width:600px;text-align:center;">00:00</div>
<div class="a t" style="top:653.71px;font-size:14.67px;line-height:14.67px;color:#ff3333;font-family:'Liberation Serif',serif;font-weight:bold;transform:scaleX(0.92);transform-origin:300px 0;left:352px;width:600px;text-align:center;">00:00</div>
<div class="a t" style="top:675.26px;font-size:13.4px;line-height:13.4px;color:#000;font-family:'Liberation Sans',sans-serif;font-weight:bold;transform:scaleX(0.92);transform-origin:300px 0;left:-229.4px;width:600px;text-align:center;">Err:504</div>
<div class="a t" style="top:673.71px;font-size:14.67px;line-height:14.67px;color:#fff;font-family:'Liberation Serif',serif;font-weight:bold;transform:scaleX(0.92);transform-origin:300px 0;left:172px;width:600px;text-align:center;">00:00</div>
<div class="a t" style="top:673.71px;font-size:14.67px;line-height:14.67px;color:#000;font-family:'Liberation Serif',serif;font-weight:bold;transform:scaleX(0.92);transform-origin:300px 0;left:262px;width:600px;text-align:center;">00:00</div>
<div class="a t" style="top:673.71px;font-size:14.67px;line-height:14.67px;color:#ff3333;font-family:'Liberation Serif',serif;font-weight:bold;transform:scaleX(0.92);transform-origin:300px 0;left:352px;width:600px;text-align:center;">00:00</div>
<div class="a t" style="top:695.26px;font-size:13.4px;line-height:13.4px;color:#000;font-family:'Liberation Sans',sans-serif;font-weight:bold;transform:scaleX(0.92);transform-origin:300px 0;left:-229.4px;width:600px;text-align:center;">Err:504</div>
<div class="a t" style="top:693.71px;font-size:14.67px;line-height:14.67px;color:#fff;font-family:'Liberation Serif',serif;font-weight:bold;transform:scaleX(0.92);transform-origin:300px 0;left:172px;width:600px;text-align:center;">00:00</div>
<div class="a t" style="top:693.71px;font-size:14.67px;line-height:14.67px;color:#000;font-family:'Liberation Serif',serif;font-weight:bold;transform:scaleX(0.92);transform-origin:300px 0;left:262px;width:600px;text-align:center;">00:00</div>
<div class="a t" style="top:693.71px;font-size:14.67px;line-height:14.67px;color:#ff3333;font-family:'Liberation Serif',serif;font-weight:bold;transform:scaleX(0.92);transform-origin:300px 0;left:352px;width:600px;text-align:center;">00:00</div>
<div class="a t" style="top:715.26px;font-size:13.4px;line-height:13.4px;color:#000;font-family:'Liberation Sans',sans-serif;font-weight:bold;transform:scaleX(0.92);transform-origin:300px 0;left:-229.4px;width:600px;text-align:center;">Err:504</div>
<div class="a t" style="top:713.71px;font-size:14.67px;line-height:14.67px;color:#fff;font-family:'Liberation Serif',serif;font-weight:bold;transform:scaleX(0.92);transform-origin:300px 0;left:172px;width:600px;text-align:center;">00:00</div>
<div class="a t" style="top:713.71px;font-size:14.67px;line-height:14.67px;color:#000;font-family:'Liberation Serif',serif;font-weight:bold;transform:scaleX(0.92);transform-origin:300px 0;left:262px;width:600px;text-align:center;">00:00</div>
<div class="a t" style="top:713.71px;font-size:14.67px;line-height:14.67px;color:#ff3333;font-family:'Liberation Serif',serif;font-weight:bold;transform:scaleX(0.92);transform-origin:300px 0;left:352px;width:600px;text-align:center;">00:00</div>
<div class="a t" style="top:735.26px;font-size:13.4px;line-height:13.4px;color:#000;font-family:'Liberation Sans',sans-serif;font-weight:bold;transform:scaleX(0.92);transform-origin:300px 0;left:-229.4px;width:600px;text-align:center;">Err:504</div>
<div class="a t" style="top:733.71px;font-size:14.67px;line-height:14.67px;color:#fff;font-family:'Liberation Serif',serif;font-weight:bold;transform:scaleX(0.92);transform-origin:300px 0;left:172px;width:600px;text-align:center;">00:00</div>
<div class="a t" style="top:733.71px;font-size:14.67px;line-height:14.67px;color:#000;font-family:'Liberation Serif',serif;font-weight:bold;transform:scaleX(0.92);transform-origin:300px 0;left:262px;width:600px;text-align:center;">00:00</div>
<div class="a t" style="top:733.71px;font-size:14.67px;line-height:14.67px;color:#ff3333;font-family:'Liberation Serif',serif;font-weight:bold;transform:scaleX(0.92);transform-origin:300px 0;left:352px;width:600px;text-align:center;">00:00</div>
<div class="a t" style="top:755.26px;font-size:13.4px;line-height:13.4px;color:#000;font-family:'Liberation Sans',sans-serif;font-weight:bold;transform:scaleX(0.92);transform-origin:300px 0;left:-229.4px;width:600px;text-align:center;">Err:504</div>
<div class="a t" style="top:753.71px;font-size:14.67px;line-height:14.67px;color:#fff;font-family:'Liberation Serif',serif;font-weight:bold;transform:scaleX(0.92);transform-origin:300px 0;left:172px;width:600px;text-align:center;">00:00</div>
<div class="a t" style="top:753.71px;font-size:14.67px;line-height:14.67px;color:#000;font-family:'Liberation Serif',serif;font-weight:bold;transform:scaleX(0.92);transform-origin:300px 0;left:262px;width:600px;text-align:center;">00:00</div>
<div class="a t" style="top:753.71px;font-size:14.67px;line-height:14.67px;color:#ff3333;font-family:'Liberation Serif',serif;font-weight:bold;transform:scaleX(0.92);transform-origin:300px 0;left:352px;width:600px;text-align:center;">00:00</div>
<div class="a t" style="top:775.26px;font-size:13.4px;line-height:13.4px;color:#000;font-family:'Liberation Sans',sans-serif;font-weight:bold;transform:scaleX(0.92);transform-origin:300px 0;left:-229.4px;width:600px;text-align:center;">Err:504</div>
<div class="a t" style="top:773.71px;font-size:14.67px;line-height:14.67px;color:#fff;font-family:'Liberation Serif',serif;font-weight:bold;transform:scaleX(0.92);transform-origin:300px 0;left:172px;width:600px;text-align:center;">00:00</div>
<div class="a t" style="top:773.71px;font-size:14.67px;line-height:14.67px;color:#000;font-family:'Liberation Serif',serif;font-weight:bold;transform:scaleX(0.92);transform-origin:300px 0;left:262px;width:600px;text-align:center;">00:00</div>
<div class="a t" style="top:773.71px;font-size:14.67px;line-height:14.67px;color:#ff3333;font-family:'Liberation Serif',serif;font-weight:bold;transform:scaleX(0.92);transform-origin:300px 0;left:352px;width:600px;text-align:center;">00:00</div>
<div class="a t" style="top:795.26px;font-size:13.4px;line-height:13.4px;color:#000;font-family:'Liberation Sans',sans-serif;font-weight:bold;transform:scaleX(0.92);transform-origin:300px 0;left:-229.4px;width:600px;text-align:center;">Err:504</div>
<div class="a t" style="top:793.71px;font-size:14.67px;line-height:14.67px;color:#fff;font-family:'Liberation Serif',serif;font-weight:bold;transform:scaleX(0.92);transform-origin:300px 0;left:172px;width:600px;text-align:center;">00:00</div>
<div class="a t" style="top:793.71px;font-size:14.67px;line-height:14.67px;color:#000;font-family:'Liberation Serif',serif;font-weight:bold;transform:scaleX(0.92);transform-origin:300px 0;left:262px;width:600px;text-align:center;">00:00</div>
<div class="a t" style="top:793.71px;font-size:14.67px;line-height:14.67px;color:#ff3333;font-family:'Liberation Serif',serif;font-weight:bold;transform:scaleX(0.92);transform-origin:300px 0;left:352px;width:600px;text-align:center;">00:00</div>
<div class="a t" style="top:815.26px;font-size:13.4px;line-height:13.4px;color:#000;font-family:'Liberation Sans',sans-serif;font-weight:bold;transform:scaleX(0.92);transform-origin:300px 0;left:-229.4px;width:600px;text-align:center;">Err:504</div>
<div class="a t" style="top:813.71px;font-size:14.67px;line-height:14.67px;color:#fff;font-family:'Liberation Serif',serif;font-weight:bold;transform:scaleX(0.92);transform-origin:300px 0;left:172px;width:600px;text-align:center;">00:00</div>
<div class="a t" style="top:813.71px;font-size:14.67px;line-height:14.67px;color:#000;font-family:'Liberation Serif',serif;font-weight:bold;transform:scaleX(0.92);transform-origin:300px 0;left:262px;width:600px;text-align:center;">00:00</div>
<div class="a t" style="top:813.71px;font-size:14.67px;line-height:14.67px;color:#ff3333;font-family:'Liberation Serif',serif;font-weight:bold;transform:scaleX(0.92);transform-origin:300px 0;left:352px;width:600px;text-align:center;">00:00</div>
</div>
<div class="a" style="left:259px;top:160px;width:80px;height:2px;background:#000;"></div>
<div class="a" style="left:259px;top:175px;width:80px;height:3px;background:#000;"></div>
<div class="a" style="left:259px;top:160px;width:3px;height:18px;background:#000;"></div>
<div class="a" style="left:336px;top:160px;width:3px;height:18px;background:#000;"></div>
<div class="a" style="left:336px;top:175px;width:6px;height:6px;background:#000;"></div>
<div class="a" style="left:243px;top:144px;width:115px;height:41px;border:5px solid #ed1c24;"></div>
<div class="a" style="left:30px;top:258px;width:78px;height:28px;border:5px solid #ed1c24;"></div>
<div class="a" style="left:1192px;top:140px;width:18px;height:697px;background:#f0f0f0;"></div>
<div class="a" style="left:1192px;top:140px;width:17px;height:3px;background:#000;"></div>
<div class="a" style="left:1209px;top:105px;width:1px;height:35px;background:#a0a0a0;"></div>
<svg class="a" style="left:1196px;top:149px;" width="9" height="7" viewBox="0 0 9 7"><path d="M1 5.8L4.5 2L8 5.8" stroke="#5a5a5a" stroke-width="2.1" fill="none"/></svg>
<div class="a" style="left:1193px;top:160px;width:15px;height:303px;background:#cdcdcd;"></div>
<svg class="a" style="left:1196px;top:808px;" width="9" height="7" viewBox="0 0 9 7"><path d="M1 1.2L4.5 5L8 1.2" stroke="#5a5a5a" stroke-width="2.1" fill="none"/></svg>
<div class="a" style="left:2px;top:820px;width:1190px;height:17px;background:#f0f0f0;"></div>
<div class="a" style="left:0px;top:820px;width:2px;height:17px;background:#f0f0f0;"></div>
<div class="a" style="left:1px;top:820px;width:1px;height:17px;background:#6e6e6e;"></div>
<div class="a" style="left:3px;top:821px;width:15px;height:15px;background:#c8c8c8;box-sizing:border-box;border:1px solid #bdbdbd"></div>
<div class="a" style="left:20px;top:821px;width:15px;height:15px;background:#c8c8c8;box-sizing:border-box;border:1px solid #bdbdbd"></div>
<div class="a" style="left:37px;top:821px;width:15px;height:15px;background:#c8c8c8;box-sizing:border-box;border:1px solid #bdbdbd"></div>
<div class="a" style="left:54px;top:821px;width:15px;height:15px;background:#c8c8c8;box-sizing:border-box;border:1px solid #bdbdbd"></div>
<svg class="a" style="left:3px;top:821px;" width="68" height="15" viewBox="0 0 68 15"><path d="M5.5 4V11M12 4V11" stroke="#fff" stroke-width="1"/><path d="M11.5 4L6 7.5L11.5 11Z" fill="#a9a9a9"/><path d="M4.5 4V11" stroke="#a9a9a9" stroke-width="1.5"/><path d="M29 4V11" stroke="#fff"/><path d="M28.5 4L23 7.5L28.5 11Z" fill="#a9a9a9"/><path d="M40 4L45.5 7.5L40 11Z" fill="#a9a9a9"/><path d="M40.5 11L45 8" stroke="#fff"/><path d="M57 4L62.5 7.5L57 11Z" fill="#a9a9a9"/><path d="M57.5 11L62 8" stroke="#fff"/><path d="M63.5 4V11" stroke="#a9a9a9" stroke-width="1.5"/><path d="M65 4V11" stroke="#fff"/></svg>
<svg class="a" style="left:0px;top:819px;" width="260" height="19" viewBox="0 0 260 19"><path d="M70 1L77.5 17.5H125V1Z" fill="#fff"/><path d="M70 1L77.5 17.5H125" fill="none" stroke="#5a5a5a"/><path d="M131.5 1.5H235L229 17.5H124.5Z" fill="#f0f0f0" stroke="#6a6a6a"/><path d="M132.5 2.5H233" stroke="#fff"/><path d="M127 13.5L129 17.5" stroke="#6a6a6a"/></svg>
<div class="a t" style="top:822.46px;font-size:12.1px;line-height:12.1px;color:#000;font-family:'Liberation Sans',sans-serif;font-weight:bold;left:79px;">Vorlage</div>
<div class="a t" style="top:822.65px;font-size:11.75px;line-height:11.75px;color:#000;font-family:'Liberation Sans',sans-serif;left:134px;">Jahres Auflistung</div>
<div class="a" style="left:236px;top:820px;width:917px;height:1px;background:#6a6a6a;"></div>
<div class="a" style="left:1152px;top:820px;width:7px;height:17px;background:#fff;box-sizing:border-box;border:1px solid #7a7a7a;border-left-color:#999"></div>
<svg class="a" style="left:1163px;top:825px;" width="8" height="8" viewBox="0 0 8 8"><path d="M6 0.8L2 4L6 7.2" stroke="#606060" stroke-width="2" fill="none"/></svg>
<svg class="a" style="left:1176px;top:825px;" width="8" height="8" viewBox="0 0 8 8"><path d="M2 0.8L6 4L2 7.2" stroke="#606060" stroke-width="2" fill="none"/></svg>
<div class="a" style="left:1189px;top:820px;width:3px;height:17px;background:#000;"></div>
<div class="a" style="left:0px;top:837px;width:1210px;height:1px;background:#d9d9d9;"></div>
<div class="a" style="left:0px;top:838px;width:1600px;height:22px;background:#f0f0f0;"></div>
<div class="a t" style="top:844.55px;font-size:11.75px;line-height:11.75px;color:#000;font-family:'Liberation Sans',sans-serif;left:11px;">Tabelle 1 / 2</div>
<div class="a" style="left:368px;top:842px;width:1px;height:16px;background:#a0a0a0;"></div>
<div class="a" style="left:821px;top:842px;width:1px;height:16px;background:#a0a0a0;"></div>
<div class="a" style="left:874px;top:842px;width:1px;height:16px;background:#a0a0a0;"></div>
<div class="a" style="left:908px;top:842px;width:1px;height:16px;background:#a0a0a0;"></div>
<div class="a" style="left:924px;top:842px;width:1px;height:16px;background:#a0a0a0;"></div>
<div class="a" style="left:953px;top:842px;width:1px;height:16px;background:#a0a0a0;"></div>
<div class="a t" style="top:845.02px;font-size:11.2px;line-height:11.2px;color:#000;font-family:'Liberation Sans',sans-serif;left:374.5px;">PageStyle_Vorlage</div>
<div class="a t" style="top:844.55px;font-size:11.75px;line-height:11.75px;color:#000;font-family:'Liberation Sans',sans-serif;left:879px;">STD</div>
<div class="a t" style="top:844.55px;font-size:11.75px;line-height:11.75px;color:#000;font-family:'Liberation Sans',sans-serif;left:912px;">*</div>
<div class="a t" style="top:844.55px;font-size:11.75px;line-height:11.75px;color:#000;font-family:'Liberation Sans',sans-serif;left:1149px;">Summe=0</div>
<div class="a" style="left:1401px;top:842px;width:1px;height:16px;background:#a0a0a0;"></div>
<div class="a" style="left:1554px;top:842px;width:1px;height:16px;background:#a0a0a0;"></div>
<svg class="a" style="left:1406px;top:844px;" width="140" height="12" viewBox="0 0 140 12"><circle cx="7.5" cy="6" r="5" fill="#b8cde6" stroke="#4a6a90"/><path d="M5 6H10" stroke="#2c4a78" stroke-width="1.3"/><path d="M19 5.5H126" stroke="#888"/><path d="M19 5V7" stroke="#888"/><path d="M70 1V3" stroke="#666"/><circle cx="70" cy="6.5" r="4" fill="#7898bc" stroke="#3a5a80"/><circle cx="134.5" cy="6" r="5" fill="#b8cde6" stroke="#4a6a90"/><path d="M132 6H137M134.5 3.5V8.5" stroke="#2c4a78" stroke-width="1.3"/></svg>
<div class="a t" style="top:844.93px;font-size:11.3px;line-height:11.3px;color:#000;font-family:'Liberation Sans',sans-serif;left:1559.5px;">100 %</div>
<div class="a" style="left:1210px;top:106px;width:390px;height:732px;background:#f0f0f0;"></div>
<div class="a" style="left:1210px;top:106px;width:6px;height:731px;background:#f7f7f7;"></div>
<div class="a" style="left:1216px;top:106px;width:1px;height:731px;background:#a0a0a0;"></div>
<div class="a" style="left:1217px;top:105px;width:381px;height:1px;background:#a0a0a0;"></div>
<div class="a" style="left:1597px;top:105px;width:1px;height:732px;background:#a0a0a0;"></div>
<div class="a" style="left:1216px;top:837px;width:382px;height:1px;background:#a0a0a0;"></div>
<svg class="a" style="left:1212px;top:450px;" width="5" height="40" viewBox="0 0 5 40"><path d="M0 3L3 5.5L0 8Z" fill="#444"/><path d="M0 11.5H2.5L1.5 13Z" fill="#555"/><path d="M0 15.5H2.5L1.5 17Z" fill="#555"/><path d="M0 19.5H2.5L1.5 21Z" fill="#555"/><path d="M0 23.5H2.5L1.5 25Z" fill="#555"/><path d="M0 27.5H2.5L1.5 29Z" fill="#555"/><path d="M0 34L3 36.5L0 39Z" fill="#444"/></svg>
<div class="a" style="left:1220px;top:109px;width:339px;height:724px;border:1px solid #e4e4e4;background:#f0f0f0;"></div>
<div class="a t" style="top:118.54px;font-size:13.3px;line-height:13.3px;color:#000;font-family:'Liberation Sans',sans-serif;font-weight:bold;transform:scaleX(0.955);transform-origin:0 0;left:1231px;">Eigenschaften</div>
<svg class="a" style="left:1546px;top:117px;" width="9" height="9" viewBox="0 0 9 9"><path d="M0.8 0.8L8.2 8.2M8.2 0.8L0.8 8.2" stroke="#444" stroke-width="1.5"/></svg>
<div class="a" style="left:1221px;top:136px;width:339px;height:26px;background:linear-gradient(#dedede,#f0f0f0)"></div>
<svg class="a" style="left:1226px;top:145px;" width="9" height="9" viewBox="0 0 9 9"><rect x="0.5" y="0.5" width="8" height="8" fill="#fff" stroke="#555"/><path d="M2 4.5H7" stroke="#333"/></svg>
<div class="a t" style="top:145.14px;font-size:13.3px;line-height:13.3px;color:#000;font-family:'Liberation Sans',sans-serif;font-weight:bold;transform:scaleX(0.955);transform-origin:0 0;left:1240px;">Text</div>
<svg class="a" style="left:1543px;top:142px;" width="11" height="10" viewBox="0 0 11 10"><rect x="0.5" y="0.5" width="10" height="9" fill="#fff" stroke="#3a6ab0"/><rect x="0.5" y="0.5" width="10" height="2" fill="#3a6ab0"/><path d="M3 6.5H3.8M5.1 6.5H5.9M7.2 6.5H8" stroke="#3a6ab0"/></svg>
<div class="a" style="left:1227px;top:165px;width:264px;height:23px;border:1px solid #a4a4aa;background:#fff;"></div>
<div class="a" style="left:1474px;top:167px;width:17px;height:21px;background:#e1e1e1;box-sizing:border-box;border:1px solid #adadad"></div>
<svg class="a" style="left:1478px;top:175px;" width="9" height="5" viewBox="0 0 9 5"><path d="M0.5 0.5L4.5 4.5L8.5 0.5" stroke="#444" fill="none"/></svg>
<div class="a t" style="top:173.05px;font-size:12.7px;line-height:12.7px;color:#000;font-family:'Liberation Sans',sans-serif;left:1230px;">Arial</div>
<div class="a" style="left:1499px;top:165px;width:51px;height:23px;border:1px solid #a4a4aa;background:#fff;"></div>
<div class="a" style="left:1533px;top:167px;width:17px;height:21px;background:#e1e1e1;box-sizing:border-box;border:1px solid #adadad"></div>
<svg class="a" style="left:1537px;top:175px;" width="9" height="5" viewBox="0 0 9 5"><path d="M0.5 0.5L4.5 4.5L8.5 0.5" stroke="#444" fill="none"/></svg>
<div class="a t" style="top:173.05px;font-size:12.7px;line-height:12.7px;color:#000;font-family:'Liberation Sans',sans-serif;left:1503px;">10</div>
<div class="a" style="left:1227px;top:201px;width:137px;height:29px;border:1px solid #e2e2e2;background:linear-gradient(#f6f6f6,#fdfdfd)"></div>
<div class="a" style="left:1229px;top:203px;width:23px;height:24px;border:1px solid #99d1ff;background:#cce8ff;"></div>
<div class="a" style="left:1253px;top:203px;width:24px;height:24px;border:1px solid #99d1ff;background:#cce8ff;"></div>
<div class="a" style="left:1499px;top:201px;width:51px;height:29px;border:1px solid #e2e2e2;background:linear-gradient(#f6f6f6,#fdfdfd)"></div>
<div class="a" style="left:1228px;top:248px;width:52px;height:29px;border:1px solid #e2e2e2;background:linear-gradient(#f6f6f6,#fdfdfd)"></div>
<div class="a" style="left:1291px;top:248px;width:38px;height:29px;border:1px solid #e2e2e2;background:linear-gradient(#f6f6f6,#fdfdfd)"></div>
<div class="a" style="left:1351px;top:248px;width:38px;height:29px;border:1px solid #e2e2e2;background:linear-gradient(#f6f6f6,#fdfdfd)"></div>
<div class="a" style="left:1221px;top:286px;width:339px;height:26px;background:linear-gradient(#dedede,#f0f0f0)"></div>
<svg class="a" style="left:1226px;top:295px;" width="9" height="9" viewBox="0 0 9 9"><rect x="0.5" y="0.5" width="8" height="8" fill="#fff" stroke="#555"/><path d="M2 4.5H7" stroke="#333"/></svg>
<div class="a t" style="top:295.14px;font-size:13.3px;line-height:13.3px;color:#000;font-family:'Liberation Sans',sans-serif;font-weight:bold;transform:scaleX(0.955);transform-origin:0 0;left:1240px;">Ausrichtung</div>
<svg class="a" style="left:1543px;top:292px;" width="11" height="10" viewBox="0 0 11 10"><rect x="0.5" y="0.5" width="10" height="9" fill="#fff" stroke="#3a6ab0"/><rect x="0.5" y="0.5" width="10" height="2" fill="#3a6ab0"/><path d="M3 6.5H3.8M5.1 6.5H5.9M7.2 6.5H8" stroke="#3a6ab0"/></svg>
<div class="a" style="left:1225px;top:313px;width:102px;height:29px;border:1px solid #e2e2e2;background:linear-gradient(#f6f6f6,#fdfdfd)"></div>
<div class="a" style="left:1252px;top:315px;width:23px;height:24px;border:1px solid #99d1ff;background:#cce8ff;"></div>
<div class="a" style="left:1351px;top:313px;width:77px;height:29px;border:1px solid #e2e2e2;background:linear-gradient(#f6f6f6,#fdfdfd)"></div>
<div class="a t" style="top:364.25px;font-size:12.7px;line-height:12.7px;color:#8c8c8c;font-family:'Liberation Sans',sans-serif;left:1227px;"><u>L</u>inker Einzug</div>
<div class="a" style="left:1227px;top:381px;width:94px;height:24px;border:1px solid #8fb0d8;background:#fff"></div>
<div class="a t" style="top:389.05px;font-size:12.7px;line-height:12.7px;color:#8c8c8c;font-family:'Liberation Sans',sans-serif;left:1231px;">0 pt</div>
<div class="a" style="left:1305px;top:383px;width:15px;height:21px;background:#f2f2f2;box-sizing:border-box;border:1px solid #ddd"></div>
<div class="a" style="left:1340px;top:364px;width:11px;height:11px;border:1px solid #333;background:#fff"></div>
<div class="a t" style="top:365.65px;font-size:12.7px;line-height:12.7px;color:#000;font-family:'Liberation Sans',sans-serif;left:1357px;">Zeilenum<u>b</u>ruch</div>
<div class="a" style="left:1340px;top:394px;width:11px;height:11px;border:1px solid #c8c8c8;background:#fff"></div>
<div class="a t" style="top:395.55px;font-size:12.7px;line-height:12.7px;color:#8c8c8c;font-family:'Liberation Sans',sans-serif;left:1357px;">Z<u>e</u>llen verbinden</div>
<div class="a t" style="top:421.25px;font-size:12.7px;line-height:12.7px;color:#000;font-family:'Liberation Sans',sans-serif;left:1227px;"><u>T</u>extausrichtung</div>
<div class="a" style="left:1298px;top:449px;width:136px;height:24px;border:1px solid #a4a4aa;background:#fff;"></div>
<div class="a" style="left:1417px;top:451px;width:17px;height:22px;background:#e1e1e1;box-sizing:border-box;border:1px solid #adadad"></div>
<svg class="a" style="left:1421px;top:460px;" width="9" height="5" viewBox="0 0 9 5"><path d="M0.5 0.5L4.5 4.5L8.5 0.5" stroke="#444" fill="none"/></svg>
<div class="a t" style="top:457.55px;font-size:12.7px;line-height:12.7px;color:#000;font-family:'Liberation Sans',sans-serif;left:1302px;">0 Grad</div>
<div class="a" style="left:1298px;top:489px;width:11px;height:11px;border:1px solid #333;background:#fff"></div>
<div class="a t" style="top:491.25px;font-size:12.7px;line-height:12.7px;color:#000;font-family:'Liberation Sans',sans-serif;left:1315px;"><u>S</u>enkrecht gestapelt</div>
<div class="a" style="left:1221px;top:513px;width:339px;height:26px;background:linear-gradient(#dedede,#f0f0f0)"></div>
<svg class="a" style="left:1226px;top:522px;" width="9" height="9" viewBox="0 0 9 9"><rect x="0.5" y="0.5" width="8" height="8" fill="#fff" stroke="#555"/><path d="M2 4.5H7" stroke="#333"/></svg>
<div class="a t" style="top:521.54px;font-size:13.3px;line-height:13.3px;color:#000;font-family:'Liberation Sans',sans-serif;font-weight:bold;transform:scaleX(0.955);transform-origin:0 0;left:1240px;">Erscheinungsbild der Zelle</div>
<svg class="a" style="left:1543px;top:519px;" width="11" height="10" viewBox="0 0 11 10"><rect x="0.5" y="0.5" width="10" height="9" fill="#fff" stroke="#3a6ab0"/><rect x="0.5" y="0.5" width="10" height="2" fill="#3a6ab0"/><path d="M3 6.5H3.8M5.1 6.5H5.9M7.2 6.5H8" stroke="#3a6ab0"/></svg>
<div class="a t" style="top:546.05px;font-size:12.7px;line-height:12.7px;color:#000;font-family:'Liberation Sans',sans-serif;left:1227px;">Zell<u>h</u>intergrund:</div>
<div class="a" style="left:1226px;top:562px;width:97px;height:24px;border:1px solid #e2e2e2;background:linear-gradient(#f6f6f6,#fdfdfd)"></div>
<div class="a" style="left:1250px;top:568px;width:54px;height:10px;border:1px solid #2c4a78;box-shadow:inset 0 0 0 1px #fff, inset 0 0 0 2px #000;background:#fff"></div>
<div class="a t" style="top:610.35px;font-size:12.7px;line-height:12.7px;color:#000;font-family:'Liberation Sans',sans-serif;left:1227px;">Zell<u>u</u>mrandung:</div>
<div class="a" style="left:1226px;top:625px;width:64px;height:56px;border:1px solid #e2e2e2;background:linear-gradient(#f6f6f6,#fdfdfd)"></div>
<div class="a" style="left:1304px;top:625px;width:98px;height:24px;border:1px solid #e2e2e2;background:linear-gradient(#f6f6f6,#fdfdfd)"></div>
<div class="a" style="left:1304px;top:663px;width:98px;height:25px;border:1px solid #e2e2e2;background:linear-gradient(#f6f6f6,#fdfdfd)"></div>
<div class="a" style="left:1329px;top:670px;width:54px;height:10px;border:1px solid #2c4a78;box-shadow:inset 0 0 0 1px #fff, inset 0 0 0 2px #000;background:#fff"></div>
<div class="a" style="left:1227px;top:706px;width:11px;height:11px;border:1px solid #333;background:#fff"></div>
<div class="a t" style="top:707.95px;font-size:12.7px;line-height:12.7px;color:#000;font-family:'Liberation Sans',sans-serif;left:1244.5px;"><u>G</u>itternetzlinien anzeigen</div>
<div class="a" style="left:1221px;top:733px;width:339px;height:26px;background:linear-gradient(#dedede,#f0f0f0)"></div>
<svg class="a" style="left:1226px;top:742px;" width="9" height="9" viewBox="0 0 9 9"><rect x="0.5" y="0.5" width="8" height="8" fill="#fff" stroke="#555"/><path d="M2 4.5H7" stroke="#333"/><path d="M4.5 2V7" stroke="#333"/></svg>
<div class="a t" style="top:742.14px;font-size:13.3px;line-height:13.3px;color:#000;font-family:'Liberation Sans',sans-serif;font-weight:bold;transform:scaleX(0.955);transform-origin:0 0;left:1240px;">Zahlenformat</div>
<svg class="a" style="left:1543px;top:739px;" width="11" height="10" viewBox="0 0 11 10"><rect x="0.5" y="0.5" width="10" height="9" fill="#fff" stroke="#3a6ab0"/><rect x="0.5" y="0.5" width="10" height="2" fill="#3a6ab0"/><path d="M3 6.5H3.8M5.1 6.5H5.9M7.2 6.5H8" stroke="#3a6ab0"/></svg>
<div class="a" style="left:1221px;top:759px;width:339px;height:1px;background:#e4e4e4;"></div>
<div class="a" style="left:1569px;top:144px;width:24px;height:1px;background:#d8d8d8;"></div>
<div class="a" style="left:1564px;top:148px;width:30px;height:30px;border:1px solid #a8a8a8;border-radius:4px;background:#f4f4f4"></div>
<svg class="a" style="left:0px;top:0px;pointer-events:none" width="1600" height="860" viewBox="0 0 1600 860"><g transform="translate(1233,208)"><rect x="0.5" y="0.5" width="15" height="14" rx="2" fill="#f4f4f4" stroke="#000" stroke-width="1.2"/><text x="8" y="12" font-family="Liberation Sans" font-weight="bold" font-size="11" text-anchor="middle">A</text></g><g transform="translate(1258,208)"><rect x="0.5" y="0.5" width="15" height="14" rx="2" fill="#f4f4f4" stroke="#000" stroke-width="1.2"/><text x="8" y="12" font-family="Liberation Sans" font-style="italic" font-size="11" text-anchor="middle">A</text></g><g transform="translate(1282,208)"><rect x="0.5" y="0.5" width="15" height="14" rx="2" fill="#f4f4f4" stroke="#000" stroke-width="1.2"/><text x="8" y="11" font-family="Liberation Sans" font-weight="bold" font-size="10" text-anchor="middle">A</text><path d="M3 12.5H13" stroke="#000"/></g><path d="M1306 214H1312L1309 217.5Z" fill="#000"/><g transform="translate(1319,208)"><rect x="0.5" y="0.5" width="15" height="14" rx="2" fill="#f4f4f4" stroke="#000" stroke-width="1.2"/><text x="8" y="12" font-family="Liberation Sans" font-size="11" text-anchor="middle">A</text><path d="M3 8H13" stroke="#000"/></g><text x="1355" y="224" font-family="Liberation Sans" font-weight="bold" font-size="18" fill="#999" text-anchor="middle">A</text><text x="1352.5" y="222.5" font-family="Liberation Sans" font-weight="bold" font-size="18" fill="#000" text-anchor="middle">A</text><g transform="translate(1505,208)"><rect x="0.5" y="0.5" width="15" height="14" rx="2" fill="#f4f4f4" stroke="#000" stroke-width="1.2"/><text x="6" y="12" font-family="Liberation Sans" font-size="10" text-anchor="middle">A</text><path d="M9 6L12 3L15 6Z" fill="#000"/></g><g transform="translate(1530,208)"><rect x="0.5" y="0.5" width="15" height="14" rx="2" fill="#f4f4f4" stroke="#000" stroke-width="1.2"/><text x="6" y="12" font-family="Liberation Sans" font-size="8" text-anchor="middle">A</text><path d="M9 3L12 6L15 3Z" fill="#000"/></g><g transform="translate(1234,255)"><rect x="0.5" y="0.5" width="15" height="14" rx="2" fill="#f4f4f4" stroke="#bbb" stroke-width="1.2"/><text x="6" y="12" font-family="Liberation Sans" font-size="10" fill="#aaa" text-anchor="middle">A</text><path d="M10 6L12.5 3.5L15 6Z" fill="#aaa"/></g><g transform="translate(1259,255)"><rect x="0.5" y="0.5" width="15" height="14" rx="2" fill="#f4f4f4" stroke="#bbb" stroke-width="1.2"/><text x="6" y="12" font-family="Liberation Sans" font-size="10" fill="#aaa" text-anchor="middle">A</text><path d="M10 4L12.5 6.5L15 4Z" fill="#aaa"/></g><g stroke="#bbb" fill="none"><path d="M1297 264L1300 257L1303 264M1304 257L1307 264L1310 257"/><path d="M1297 268H1312M1297 268L1300 265.5M1297 268L1300 270.5M1312 268L1309 265.5M1312 268L1309 270.5"/></g><path d="M1318 263H1324L1321 266.5Z" fill="#aaa"/><g transform="translate(1356,255)"><rect x="0.5" y="0.5" width="15" height="13" fill="#f4f4f4" stroke="#000"/><text x="8" y="12" font-family="Liberation Sans" font-weight="bold" font-size="12" fill="#2c4a78" text-anchor="middle">A</text><rect x="0.5" y="13.5" width="15" height="2.5" fill="#fff" stroke="#000"/></g><path d="M1380 261H1386L1383 264.5Z" fill="#000"/><path d="M1231 321.8H1245" stroke="#34548a" stroke-width="1.7"/><path d="M1231 324.89H1241" stroke="#34548a" stroke-width="1.7"/><path d="M1231 327.98H1245" stroke="#34548a" stroke-width="1.7"/><path d="M1231 331.07H1241" stroke="#34548a" stroke-width="1.7"/><path d="M1231 334.16H1245" stroke="#34548a" stroke-width="1.7"/><path d="M1257.0 321.8H1271.0" stroke="#34548a" stroke-width="1.7"/><path d="M1259.0 324.89H1269.0" stroke="#34548a" stroke-width="1.7"/><path d="M1257.0 327.98H1271.0" stroke="#34548a" stroke-width="1.7"/><path d="M1259.0 331.07H1269.0" stroke="#34548a" stroke-width="1.7"/><path d="M1257.0 334.16H1271.0" stroke="#34548a" stroke-width="1.7"/><path d="M1282 321.8H1296" stroke="#34548a" stroke-width="1.7"/><path d="M1286 324.89H1296" stroke="#34548a" stroke-width="1.7"/><path d="M1282 327.98H1296" stroke="#34548a" stroke-width="1.7"/><path d="M1286 331.07H1296" stroke="#34548a" stroke-width="1.7"/><path d="M1282 334.16H1296" stroke="#34548a" stroke-width="1.7"/><path d="M1307 321.8H1321" stroke="#34548a" stroke-width="1.7"/><path d="M1307 324.89H1321" stroke="#34548a" stroke-width="1.7"/><path d="M1307 327.98H1321" stroke="#34548a" stroke-width="1.7"/><path d="M1307 331.07H1321" stroke="#34548a" stroke-width="1.7"/><path d="M1307 334.16H1321" stroke="#34548a" stroke-width="1.7"/><path d="M1358 321H1371M1358 325H1368" stroke="#34548a" stroke-width="1.7"/><path d="M1383 325.5H1396M1383 329.5H1396" stroke="#34548a" stroke-width="1.7"/><path d="M1408 330H1421M1408 334H1421" stroke="#34548a" stroke-width="1.7"/><path d="M1309 389.5L1312.5 386L1316 389.5Z" fill="#555"/><path d="M1309 397L1312.5 400.5L1316 397Z" fill="#555"/><circle cx="1251.5" cy="467" r="24" fill="none" stroke="#4a6a98" stroke-width="1.1"/><path d="M1251.5 467H1275" stroke="#4a6a98" stroke-width="1.1"/><rect x="1250" y="465.5" width="3" height="3" fill="#2c4a78"/><g transform="translate(1233,567)"><path d="M1 7L6 2L11 7L6 12Z" fill="#c8d8f0" stroke="#2c4a78"/><path d="M3 3Q5 0 8 1" stroke="#2c4a78" fill="none"/><path d="M11 7Q13 9 12 12" stroke="#2c4a78" fill="none"/></g><path d="M1313 573H1319L1316 576.5Z" fill="#000"/><g stroke="#4a6a98" stroke-dasharray="1 2" fill="none"><path d="M1232.5 633.5H1273.5V673.5H1232.5Z"/><path d="M1253 633.5V673.5M1232.5 653.5H1273.5"/></g><path d="M1280 652H1286L1283 655.5Z" fill="#000"/><path d="M1311 638.5H1384" stroke="#000"/><path d="M1392 637H1398L1395 640.5Z" fill="#000"/><g transform="translate(1309,668)"><path d="M1 13L3 8L10 1L13 4L6 11Z" fill="#f0c040" stroke="#7a5a20"/><path d="M7 14H15" stroke="#2c4a78" stroke-width="1.5"/></g><path d="M1392 675H1398L1395 678.5Z" fill="#000"/><g transform="translate(1575,121)"><path d="M0 0.5H8M0 2.5H8M0 4.5H8M0 6.5H6" stroke="#2a3a5a"/><path d="M5 7H11L8 10Z" fill="#000"/></g><g transform="translate(1568,152)"><path d="M11 1L21 6L11 11L1 6Z" fill="#50c0f0"/><path d="M11 1L21 6L16 8.5L6 3.5Z" fill="#8ad850"/><path d="M1 6L11 11V21L1 16Z" fill="#2898e0"/><path d="M6 13.5L11 16V21L6 18.5Z" fill="#70d040"/><path d="M11 11L21 6V16L11 21Z" fill="#68c838"/><path d="M6 3.5L16 8.5M16 3.5L6 8.5M1 11L11 16L21 11M6 8.5V18.5M16 8.5V18.5M11 11V21" stroke="#fff" stroke-width="0.8" fill="none"/><ellipse cx="11" cy="23" rx="9" ry="1.5" fill="#000" opacity="0.15"/></g><g transform="translate(1568,187)"><path d="M2 18L9 5L14 11Z" fill="#2a78c8"/><path d="M9 5Q14 3 18 9Q19 14 14 16Z" fill="#0a2a58"/><path d="M14 16Q18 13 20 17Q17 21 12 19Z" fill="#6ab040"/><path d="M5 6Q6 1 11 2Q8 4 8 7Z" fill="#e08020"/><circle cx="3" cy="10" r="2" fill="#e040a0"/><circle cx="13" cy="2" r="2" fill="#c060e0"/><path d="M19 1L20 4L23 4L21 6L22 9L19 7.5L16 9L17 6L15 4L18 4Z" fill="#f0c030"/><circle cx="21" cy="13" r="2" fill="#e04060"/><ellipse cx="12" cy="22" rx="9" ry="1.5" fill="#000" opacity="0.12"/></g><g transform="translate(1567,222)"><path d="M1 9L20 1L24 13L5 21Z" fill="#fff" stroke="#aaa"/><path d="M4 10L19 4L22 12L7 18Z" fill="#80c0f0"/><path d="M7 18L11 11L15 14L22 12Z" fill="#60b040"/><path d="M9 12L12 9.5L14 13" fill="none" stroke="#2a5a90" stroke-width="1.2"/><ellipse cx="13" cy="23" rx="9" ry="1.5" fill="#000" opacity="0.12"/></g><g transform="translate(1568,257)"><circle cx="12" cy="11" r="10" fill="#fff" stroke="#f0a020" stroke-width="2.6"/><path d="M17 5L13.5 12.5L7 17L10.5 9.5Z" fill="#e04040"/><path d="M10.5 9.5L7 17L13.5 12.5Z" fill="#4a80d0"/><text x="12" y="7" font-family="Liberation Sans" font-weight="bold" font-size="5" text-anchor="middle" fill="#333">N</text><ellipse cx="12" cy="23" rx="9" ry="1.5" fill="#000" opacity="0.12"/></g><g transform="translate(1566,291)"><path d="M8 1H18L23 6V22H8Z" fill="#fff" stroke="#3a90d0"/><path d="M18 1V6H23" fill="none" stroke="#3a90d0"/><text x="12" y="18" font-family="Liberation Serif" font-style="italic" font-size="17" fill="#1a3a78" text-anchor="middle">fx</text><ellipse cx="14" cy="24" rx="9" ry="1.5" fill="#000" opacity="0.12"/></g></svg>
</body></html>
